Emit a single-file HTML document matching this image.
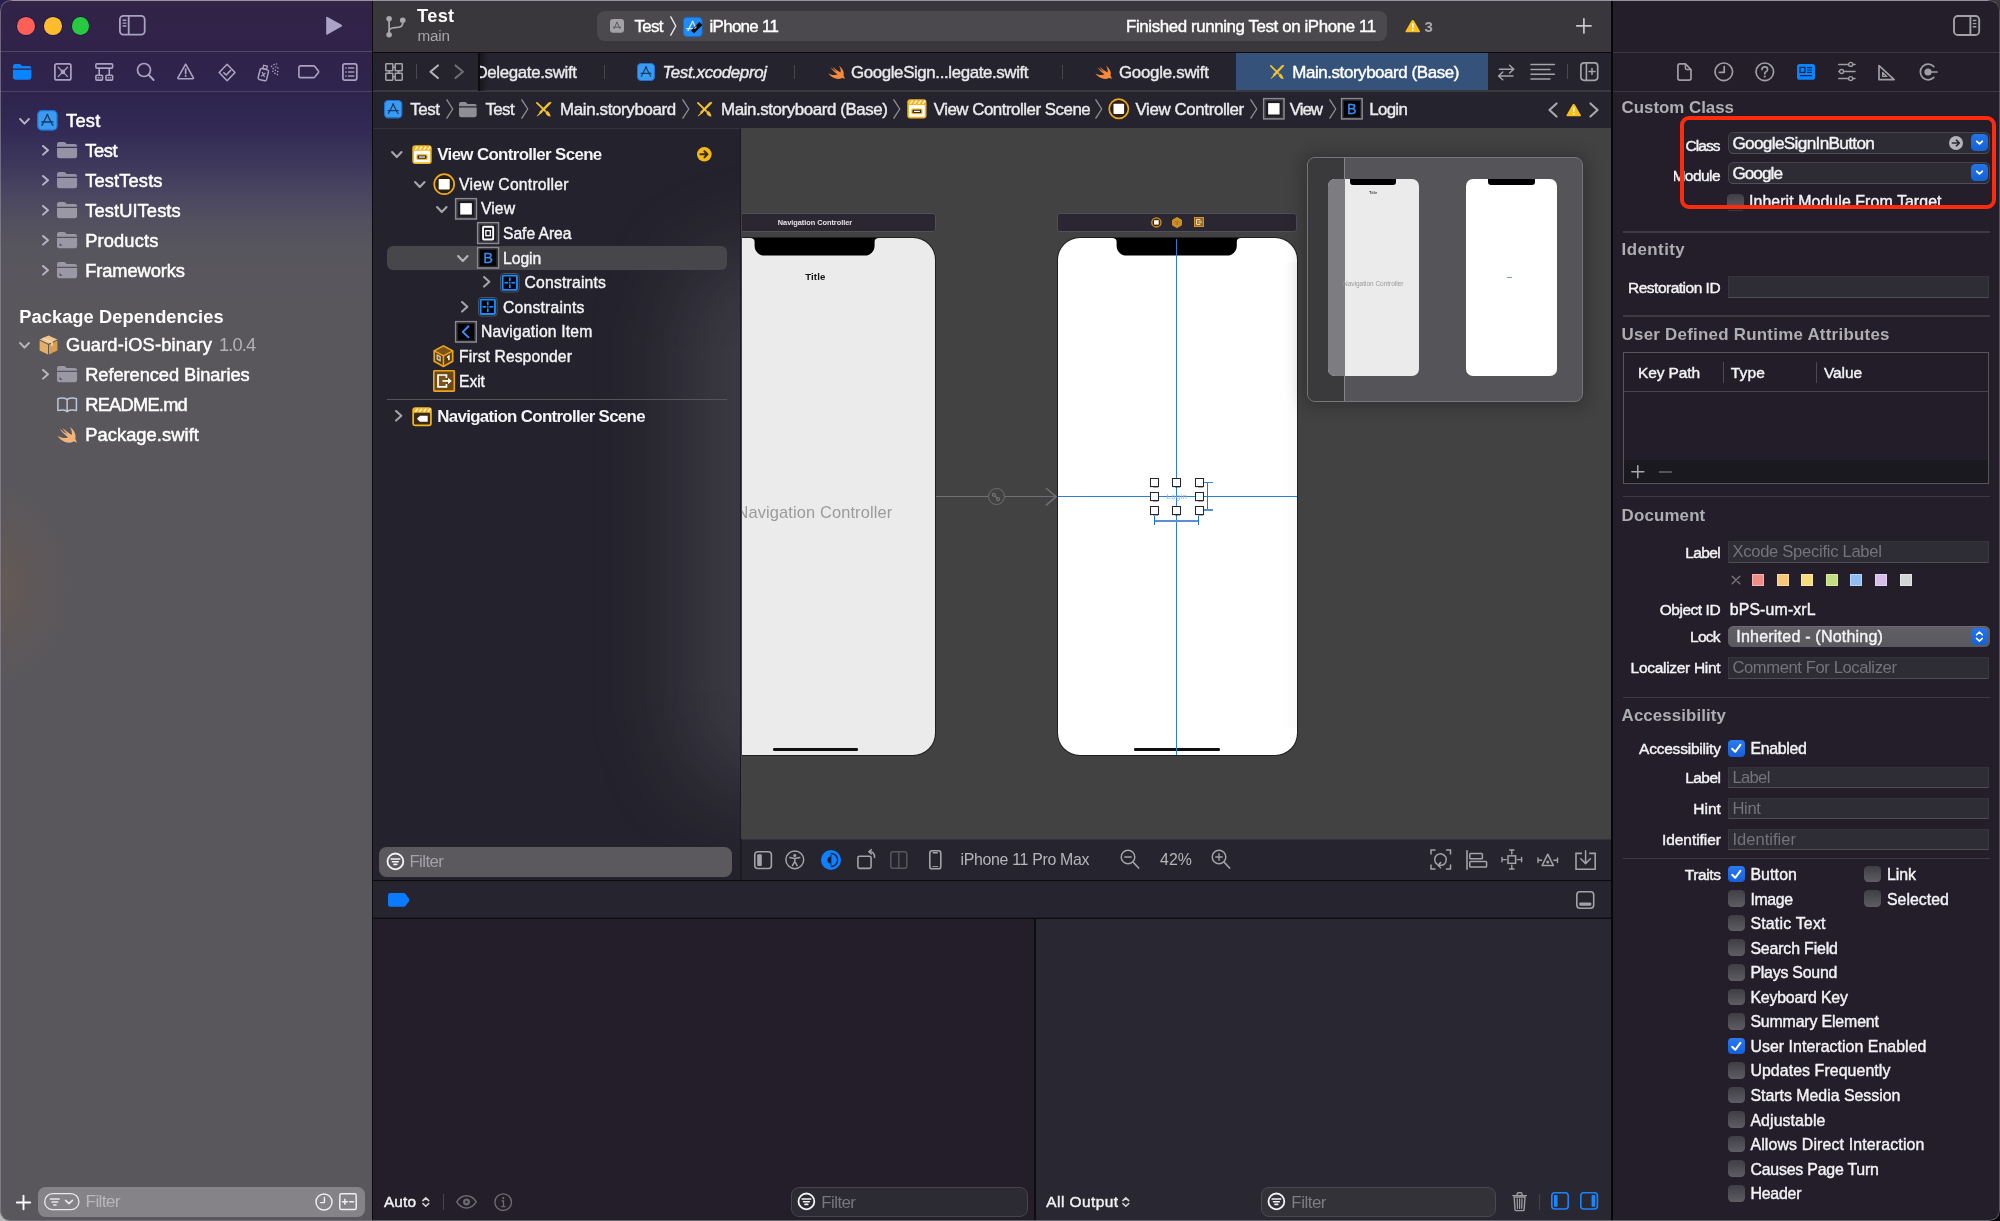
<!DOCTYPE html>
<html lang="en"><head><meta charset="utf-8"><title>Xcode</title><style>
html,body{margin:0;padding:0;background:#1c1a22;}
body{width:2000px;height:1221px;position:relative;overflow:hidden;font-family:"Liberation Sans",sans-serif;}
#win{position:absolute;left:0;top:0;width:2000px;height:1221px;overflow:hidden;will-change:transform;border-radius:10.5px;}
.r{position:absolute;display:block;box-sizing:border-box;}
.t{position:absolute;white-space:pre;display:block;}
svg{overflow:visible;}
</style></head>
<body>
<div class="r" style="left:0;top:0;width:14px;height:14px;background:#2a1f52"></div><div class="r" style="right:0;top:0;width:14px;height:14px;background:#3a393d"></div><div class="r" style="left:0;bottom:0;width:14px;height:14px;background:#b9b9ba"></div><div class="r" style="right:0;bottom:0;width:14px;height:14px;background:#060608"></div>
<div id="win">
<div class="r" style="left:0.00px;top:0.00px;width:372.00px;height:1221.00px;background:linear-gradient(to bottom,#322347 0px,#30234a 52px,#2e244e 95px,#322a55 130px,#3e385c 165px,#4a4660 195px,#53505f 222px,#58565d 252px,#59575c 300px,#59575c 1221px);"></div>
<div class="r" style="left:0.00px;top:470.00px;width:160.00px;height:240.00px;background:radial-gradient(ellipse 75px 105px at 0px 115px,rgba(116,92,78,0.5) 0%,rgba(106,90,82,0.32) 45%,rgba(89,87,92,0) 100%);"></div>
<div class="r" style="left:0.00px;top:51.00px;width:372.00px;height:1.00px;background:rgba(255,255,255,0.16);"></div>
<div class="r" style="left:0.00px;top:91.00px;width:372.00px;height:1.00px;background:rgba(255,255,255,0.14);"></div>
<div class="r" style="left:373.00px;top:0.00px;width:1238.00px;height:52.00px;background:#39373c;"></div>
<div class="r" style="left:373.00px;top:52.00px;width:1238.00px;height:1.00px;background:#0b0a0e;"></div>
<div class="r" style="left:373.00px;top:53.00px;width:1238.00px;height:75.00px;background:#25232d;"></div>
<div class="r" style="left:373.00px;top:90.00px;width:1238.00px;height:1.50px;background:#3a3840;"></div>
<div class="r" style="left:373.00px;top:127.50px;width:368.00px;height:1.00px;background:#35333b;"></div>
<div class="r" style="left:373.00px;top:128.50px;width:368.00px;height:752.00px;background:#24222c;"></div>
<div class="r" style="left:373px;top:128.5px;width:367.5px;height:752px;overflow:hidden">
<div class="r" style="left:312px;top:125px;width:200px;height:535px;border-radius:60px;background:rgba(150,150,158,0.22);filter:blur(44px)"></div>
</div>
<div class="r" style="left:741.00px;top:128.00px;width:870.00px;height:711.00px;background:#424242;"></div>
<div class="r" style="left:740.00px;top:128.00px;width:1.30px;height:752.00px;background:#1b1a1f;"></div>
<div class="r" style="left:741.50px;top:839.60px;width:869.50px;height:40.40px;background:#26242e;"></div>
<div class="r" style="left:741.50px;top:839.20px;width:869.50px;height:1.00px;background:#33313a;"></div>
<div class="r" style="left:373.00px;top:879.50px;width:1238.00px;height:1.40px;background:#0b0a0e;"></div>
<div class="r" style="left:373.00px;top:880.90px;width:1238.00px;height:36.60px;background:#26242e;"></div>
<div class="r" style="left:373.00px;top:917.50px;width:1238.00px;height:1.00px;background:#0e0d12;"></div>
<div class="r" style="left:373.00px;top:918.50px;width:661.00px;height:303.00px;background:#231e2a;"></div>
<div class="r" style="left:1034.00px;top:918.50px;width:1.50px;height:303.00px;background:#0e0d12;"></div>
<div class="r" style="left:1035.50px;top:918.50px;width:575.50px;height:303.00px;background:#292832;"></div>
<div class="r" style="left:1612.00px;top:0.00px;width:388.00px;height:1221.00px;background:#231e2a;"></div>
<div class="r" style="left:1611.00px;top:0.00px;width:1.60px;height:1221.00px;background:#070609;"></div>
<div class="r" style="left:1613.00px;top:52.00px;width:387.00px;height:1.00px;background:#3a3840;"></div>
<div class="r" style="left:1613.00px;top:90.50px;width:387.00px;height:1.20px;background:#3a3840;"></div>
<div class="r" style="left:372.00px;top:0.00px;width:1.20px;height:1221.00px;background:#0d0b12;"></div>
<div class="r" style="left:17.10px;top:17.10px;width:17.60px;height:17.60px;background:#fe5f57;border-radius:50%;box-shadow:0 0 0 0.7px rgba(10,10,60,0.55);"></div>
<div class="r" style="left:44.30px;top:17.10px;width:17.60px;height:17.60px;background:#febc2e;border-radius:50%;box-shadow:0 0 0 0.7px rgba(10,10,60,0.55);"></div>
<div class="r" style="left:71.50px;top:17.10px;width:17.60px;height:17.60px;background:#28c840;border-radius:50%;box-shadow:0 0 0 0.7px rgba(10,10,60,0.55);"></div>
<svg class="r" style="left:119.20px;top:15.10px;" width="26.60" height="20.50" viewBox="0 0 26.6 20.5" preserveAspectRatio="none"><rect x="0.9" y="0.9" width="24.8" height="18.7" rx="3.6" fill="none" stroke="#a9a3c0" stroke-width="1.8"/><path d="M9.7 1 L9.7 19.5" stroke="#a9a3c0" stroke-width="1.8"/><g stroke="#a9a3c0" stroke-width="1.4"><path d="M3.6 5.2 L7.4 5.2"/><path d="M3.6 8.1 L7.4 8.1"/><path d="M3.6 11 L7.4 11"/></g></svg>
<svg class="r" style="left:325.20px;top:15.60px;" width="18.00" height="19.50" viewBox="0 0 18 19.5" preserveAspectRatio="none"><path d="M1.2 1.6 Q1.2 0.2 2.5 0.9 L16.6 8.8 Q17.8 9.7 16.6 10.6 L2.5 18.6 Q1.2 19.3 1.2 17.9 Z" fill="#aba2c8"/></svg>
<svg class="r" style="left:12.80px;top:63.90px;" width="18.40" height="15.70" viewBox="0 0 18.4 15.7" preserveAspectRatio="none"><path d="M0 2.4 Q0 0 2.4 0 L6.2 0 Q7.2 0 7.9 0.7 L9.2 2 L16 2 Q18.4 2 18.4 4.4 L18.4 4.5 L0 4.5 Z" fill="#0a84ff"/><path d="M0 5.7 L18.4 5.7 L18.4 13.3 Q18.4 15.7 16 15.7 L2.4 15.7 Q0 15.7 0 13.3 Z" fill="#0a84ff"/></svg>
<svg class="r" style="left:54.00px;top:62.70px;" width="17.80" height="17.80" viewBox="0 0 17.8 17.8" preserveAspectRatio="none"><rect x="0.9" y="0.9" width="16" height="16" rx="2" fill="none" stroke="#a9a3c0" stroke-width="1.7"/><g stroke="#a9a3c0" stroke-width="1.3" stroke-linecap="round"><path d="M4.2 4.2 L13.6 13.6"/><path d="M13.6 4.2 L4.2 13.6"/></g><circle cx="8.9" cy="8.9" r="2.3" fill="#a9a3c0"/></svg>
<svg class="r" style="left:95.00px;top:62.50px;" width="18.50" height="18.00" viewBox="0 0 18.5 18" preserveAspectRatio="none"><rect x="0.9" y="0.9" width="16.7" height="4.2" rx="0.8" fill="none" stroke="#a9a3c0" stroke-width="1.6"/><path d="M4.2 5.2 L4.2 12.2 M14.3 5.2 L14.3 12.2" stroke="#a9a3c0" stroke-width="1.6" fill="none"/><rect x="0.9" y="12.3" width="6.6" height="4.8" rx="0.8" fill="none" stroke="#a9a3c0" stroke-width="1.6"/><rect x="11" y="12.3" width="6.6" height="4.8" rx="0.8" fill="none" stroke="#a9a3c0" stroke-width="1.6"/><circle cx="3.3" cy="14.7" r="0.7" fill="#a9a3c0"/><circle cx="5.2" cy="14.7" r="0.7" fill="#a9a3c0"/><circle cx="13.4" cy="14.7" r="0.7" fill="#a9a3c0"/><circle cx="15.3" cy="14.7" r="0.7" fill="#a9a3c0"/></svg>
<svg class="r" style="left:135.50px;top:62.00px;" width="19.00" height="19.50" viewBox="0 0 19 19.5" preserveAspectRatio="none"><circle cx="8" cy="8" r="6.5" fill="none" stroke="#a9a3c0" stroke-width="1.7"/><path d="M12.8 13 L17.6 18" stroke="#a9a3c0" stroke-width="1.9" stroke-linecap="round"/></svg>
<svg class="r" style="left:177.00px;top:62.50px;" width="17.30" height="16.70" viewBox="0 0 17.3 16.7" preserveAspectRatio="none"><path d="M8.65 1.2 L16.3 14.6 Q16.8 15.7 15.6 15.8 L1.7 15.8 Q0.5 15.7 1 14.6 Z" fill="none" stroke="#a9a3c0" stroke-width="1.6" stroke-linejoin="round"/><path d="M8.65 6 L8.65 10.6" stroke="#a9a3c0" stroke-width="1.7" stroke-linecap="round"/><circle cx="8.65" cy="13.1" r="1" fill="#a9a3c0"/></svg>
<svg class="r" style="left:217.80px;top:62.50px;" width="18.20" height="19.00" viewBox="0 0 18.2 19" preserveAspectRatio="none"><path d="M9.1 1.3 L17 9.5 L9.1 17.7 L1.2 9.5 Z" fill="none" stroke="#a9a3c0" stroke-width="1.6" stroke-linejoin="round"/><path d="M5.9 9.8 L8.3 12 L12.6 7.4" fill="none" stroke="#a9a3c0" stroke-width="1.6" stroke-linecap="round" stroke-linejoin="round"/></svg>
<svg class="r" style="left:257.50px;top:62.50px;" width="21.00" height="18.50" viewBox="0 0 21 18.5" preserveAspectRatio="none"><g transform="rotate(14 6 11)"><rect x="1.2" y="6.2" width="8.6" height="11.2" rx="1.6" fill="none" stroke="#a9a3c0" stroke-width="1.5"/><rect x="3.6" y="2.6" width="3.8" height="3.4" fill="none" stroke="#a9a3c0" stroke-width="1.3"/><path d="M3.8 9.6 L7.2 13.8 M7.2 9.6 L3.8 13.8" stroke="#a9a3c0" stroke-width="1.2"/></g><g fill="#a9a3c0"><circle cx="13.6" cy="3.4" r="0.8"/><circle cx="16" cy="1.6" r="0.8"/><circle cx="18.6" cy="1" r="0.8"/><circle cx="15.2" cy="5.6" r="0.8"/><circle cx="17.8" cy="4" r="0.8"/><circle cx="20" cy="5" r="0.8"/><circle cx="14.8" cy="8.2" r="0.8"/><circle cx="17.4" cy="7.2" r="0.8"/><circle cx="19.8" cy="8.6" r="0.8"/><circle cx="17" cy="10.4" r="0.8"/><circle cx="19.4" cy="11.6" r="0.8"/></g></svg>
<svg class="r" style="left:297.50px;top:64.50px;" width="21.50" height="13.50" viewBox="0 0 21.5 13.5" preserveAspectRatio="none"><path d="M2.6 0.9 L15.4 0.9 Q16.2 0.9 16.8 1.6 L20.4 6 Q20.9 6.75 20.4 7.5 L16.8 11.9 Q16.2 12.6 15.4 12.6 L2.6 12.6 Q0.9 12.6 0.9 10.9 L0.9 2.6 Q0.9 0.9 2.6 0.9 Z" fill="none" stroke="#a9a3c0" stroke-width="1.6"/></svg>
<svg class="r" style="left:341.80px;top:63.00px;" width="15.70" height="18.00" viewBox="0 0 15.7 18" preserveAspectRatio="none"><rect x="0.9" y="0.9" width="13.9" height="16.2" rx="2" fill="none" stroke="#a9a3c0" stroke-width="1.7"/><g stroke="#a9a3c0" stroke-width="1.4"><path d="M6 5 L12.4 5"/><path d="M6 9 L12.4 9"/><path d="M6 13 L12.4 13"/><path d="M3.3 5 L4.6 5"/><path d="M3.3 9 L4.6 9"/><path d="M3.3 13 L4.6 13"/></g></svg>
<svg class="r" style="left:19.00px;top:117.50px;" width="11.00" height="6.60" viewBox="0 0 11 7" preserveAspectRatio="none"><path d="M1 1 L5.5 6 L10 1" fill="none" stroke="#b7b3c6" stroke-width="2" stroke-linecap="round" stroke-linejoin="round"/></svg>
<svg class="r" style="left:37.20px;top:109.90px;" width="20.70" height="20.70" viewBox="0 0 20 20" preserveAspectRatio="none"><rect x="0.6" y="0.6" width="18.8" height="18.8" rx="4" fill="#3a9bf3" stroke="#1d73d3" stroke-width="1.2"/><g stroke="#173a66" stroke-width="1.3" fill="none" stroke-linecap="round"><path d="M10 4.6 L5.6 13.4"/><path d="M10 4.6 L14.4 13.4"/><path d="M4.6 11.6 L15.4 11.6"/></g><circle cx="10" cy="4.6" r="1" fill="#173a66"/><circle cx="4.9" cy="14.4" r="0.9" fill="#173a66"/><circle cx="15.1" cy="14.4" r="0.9" fill="#173a66"/></svg>
<span class="t" style="left:66.00px;top:110px;font-size:18.30px;color:#ffffff;line-height:21px;height:21px;letter-spacing:0.279px;-webkit-text-stroke:0.49px #ffffff;">Test</span>
<svg class="r" style="left:41.50px;top:144.70px;" width="7.00" height="10.60" viewBox="0 0 7 11" preserveAspectRatio="none"><path d="M1 1 L6 5.5 L1 10" fill="none" stroke="#b7b3c6" stroke-width="2" stroke-linecap="round" stroke-linejoin="round"/></svg>
<svg class="r" style="left:56.70px;top:142.20px;" width="20.10" height="16.30" viewBox="0 0 20 16" preserveAspectRatio="none"><path d="M0 2.2 Q0 0 2.2 0 L6.8 0 Q7.8 0 8.5 0.8 L9.6 2 L17.8 2 Q20 2 20 4.2 L20 4.6 L0 4.6 Z" fill="#9492a4"/><path d="M0 5.8 L20 5.8 L20 13.8 Q20 16 17.8 16 L2.2 16 Q0 16 0 13.8 Z" fill="#9492a4"/></svg>
<span class="t" style="left:85.20px;top:140px;font-size:18.30px;color:#ffffff;line-height:21px;height:21px;letter-spacing:-0.387px;-webkit-text-stroke:0.49px #ffffff;">Test</span>
<svg class="r" style="left:41.50px;top:174.70px;" width="7.00" height="10.60" viewBox="0 0 7 11" preserveAspectRatio="none"><path d="M1 1 L6 5.5 L1 10" fill="none" stroke="#b7b3c6" stroke-width="2" stroke-linecap="round" stroke-linejoin="round"/></svg>
<svg class="r" style="left:56.70px;top:172.20px;" width="20.10" height="16.30" viewBox="0 0 20 16" preserveAspectRatio="none"><path d="M0 2.2 Q0 0 2.2 0 L6.8 0 Q7.8 0 8.5 0.8 L9.6 2 L17.8 2 Q20 2 20 4.2 L20 4.6 L0 4.6 Z" fill="#9492a4"/><path d="M0 5.8 L20 5.8 L20 13.8 Q20 16 17.8 16 L2.2 16 Q0 16 0 13.8 Z" fill="#9492a4"/></svg>
<span class="t" style="left:85.20px;top:170px;font-size:18.30px;color:#ffffff;line-height:21px;height:21px;letter-spacing:0.141px;-webkit-text-stroke:0.49px #ffffff;">TestTests</span>
<svg class="r" style="left:41.50px;top:204.70px;" width="7.00" height="10.60" viewBox="0 0 7 11" preserveAspectRatio="none"><path d="M1 1 L6 5.5 L1 10" fill="none" stroke="#b7b3c6" stroke-width="2" stroke-linecap="round" stroke-linejoin="round"/></svg>
<svg class="r" style="left:56.70px;top:202.20px;" width="20.10" height="16.30" viewBox="0 0 20 16" preserveAspectRatio="none"><path d="M0 2.2 Q0 0 2.2 0 L6.8 0 Q7.8 0 8.5 0.8 L9.6 2 L17.8 2 Q20 2 20 4.2 L20 4.6 L0 4.6 Z" fill="#9a98a4"/><path d="M0 5.8 L20 5.8 L20 13.8 Q20 16 17.8 16 L2.2 16 Q0 16 0 13.8 Z" fill="#9a98a4"/></svg>
<span class="t" style="left:85.20px;top:200px;font-size:18.30px;color:#ffffff;line-height:21px;height:21px;letter-spacing:0.103px;-webkit-text-stroke:0.49px #ffffff;">TestUITests</span>
<svg class="r" style="left:41.50px;top:234.70px;" width="7.00" height="10.60" viewBox="0 0 7 11" preserveAspectRatio="none"><path d="M1 1 L6 5.5 L1 10" fill="none" stroke="#b7b3c6" stroke-width="2" stroke-linecap="round" stroke-linejoin="round"/></svg>
<svg class="r" style="left:56.70px;top:232.20px;" width="20.10" height="16.30" viewBox="0 0 20 16" preserveAspectRatio="none"><path d="M0 2.2 Q0 0 2.2 0 L6.8 0 Q7.8 0 8.5 0.8 L9.6 2 L17.8 2 Q20 2 20 4.2 L20 4.6 L0 4.6 Z" fill="#9a98a4"/><path d="M0 5.8 L20 5.8 L20 13.8 Q20 16 17.8 16 L2.2 16 Q0 16 0 13.8 Z" fill="#9a98a4"/><path d="M2.6 10.8 L2.6 13.6 L5.4 13.6 Z" fill="#4a4850"/></svg>
<span class="t" style="left:85.20px;top:230px;font-size:18.30px;color:#ffffff;line-height:21px;height:21px;letter-spacing:0.140px;-webkit-text-stroke:0.49px #ffffff;">Products</span>
<svg class="r" style="left:41.50px;top:264.70px;" width="7.00" height="10.60" viewBox="0 0 7 11" preserveAspectRatio="none"><path d="M1 1 L6 5.5 L1 10" fill="none" stroke="#b7b3c6" stroke-width="2" stroke-linecap="round" stroke-linejoin="round"/></svg>
<svg class="r" style="left:56.70px;top:262.20px;" width="20.10" height="16.30" viewBox="0 0 20 16" preserveAspectRatio="none"><path d="M0 2.2 Q0 0 2.2 0 L6.8 0 Q7.8 0 8.5 0.8 L9.6 2 L17.8 2 Q20 2 20 4.2 L20 4.6 L0 4.6 Z" fill="#9a98a4"/><path d="M0 5.8 L20 5.8 L20 13.8 Q20 16 17.8 16 L2.2 16 Q0 16 0 13.8 Z" fill="#9a98a4"/><path d="M2.6 10.8 L2.6 13.6 L5.4 13.6 Z" fill="#4a4850"/></svg>
<span class="t" style="left:85.20px;top:260px;font-size:18.30px;color:#ffffff;line-height:21px;height:21px;letter-spacing:-0.096px;-webkit-text-stroke:0.49px #ffffff;">Frameworks</span>
<span class="t" style="left:19.20px;top:306px;font-size:18.30px;color:#ffffff;line-height:21px;height:21px;font-weight:700;letter-spacing:0.061px;">Package Dependencies</span>
<svg class="r" style="left:19.00px;top:341.70px;" width="11.00" height="6.60" viewBox="0 0 11 7" preserveAspectRatio="none"><path d="M1 1 L5.5 6 L10 1" fill="none" stroke="#b9b7bd" stroke-width="2" stroke-linecap="round" stroke-linejoin="round"/></svg>
<svg class="r" style="left:38.50px;top:334.50px;" width="19.00" height="20.00" viewBox="0 0 19 20" preserveAspectRatio="none"><path d="M9.5 0.6 L18.4 4.6 L9.5 8.8 L0.6 4.6 Z" fill="#f0c68a"/><path d="M0.6 5.6 L9 9.7 L9 19.6 L0.6 15.4 Z" fill="#e3ae66"/><path d="M18.4 5.6 L10 9.7 L10 19.6 L18.4 15.4 Z" fill="#d99d52"/><path d="M4.6 2.6 L13.8 7 L13.8 10.6 L12 11.4 L12 7.8 L3 3.4 Z" fill="#f8dcb0" opacity="0.85"/></svg>
<span class="t" style="left:66.00px;top:334px;font-size:18.30px;color:#ffffff;line-height:21px;height:21px;letter-spacing:0.173px;-webkit-text-stroke:0.49px #ffffff;">Guard-iOS-binary</span>
<span class="t" style="left:219.00px;top:334px;font-size:18.30px;color:#b4b2b7;line-height:21px;height:21px;letter-spacing:-0.850px;">1.0.4</span>
<svg class="r" style="left:41.50px;top:368.70px;" width="7.00" height="10.60" viewBox="0 0 7 11" preserveAspectRatio="none"><path d="M1 1 L6 5.5 L1 10" fill="none" stroke="#b9b7bd" stroke-width="2" stroke-linecap="round" stroke-linejoin="round"/></svg>
<svg class="r" style="left:56.70px;top:366.20px;" width="20.10" height="16.30" viewBox="0 0 20 16" preserveAspectRatio="none"><path d="M0 2.2 Q0 0 2.2 0 L6.8 0 Q7.8 0 8.5 0.8 L9.6 2 L17.8 2 Q20 2 20 4.2 L20 4.6 L0 4.6 Z" fill="#9a98a4"/><path d="M0 5.8 L20 5.8 L20 13.8 Q20 16 17.8 16 L2.2 16 Q0 16 0 13.8 Z" fill="#9a98a4"/><path d="M2.6 10.8 L2.6 13.6 L5.4 13.6 Z" fill="#4a4850"/></svg>
<span class="t" style="left:85.20px;top:364px;font-size:18.30px;color:#ffffff;line-height:21px;height:21px;letter-spacing:-0.067px;-webkit-text-stroke:0.49px #ffffff;">Referenced Binaries</span>
<svg class="r" style="left:56.70px;top:396.50px;" width="20.30" height="16.00" viewBox="0 0 20.3 16" preserveAspectRatio="none"><path d="M10.15 2.6 C8.4 0.9 4 0.6 0.9 1.6 L0.9 13.6 C4 12.6 8.4 12.9 10.15 14.6 C11.9 12.9 16.3 12.6 19.4 13.6 L19.4 1.6 C16.3 0.6 11.9 0.9 10.15 2.6 Z M10.15 2.6 L10.15 14.6" fill="none" stroke="#b9c6dc" stroke-width="1.5" stroke-linejoin="round"/></svg>
<span class="t" style="left:85.20px;top:394px;font-size:18.30px;color:#ffffff;line-height:21px;height:21px;letter-spacing:-0.763px;-webkit-text-stroke:0.49px #ffffff;">README.md</span>
<svg class="r" style="left:57.00px;top:426.00px;" width="20.00" height="17.50" viewBox="0 0 18 16" preserveAspectRatio="none"><path d="M11.6 0.8 C15.6 3.6 17.6 8.2 16.4 11.6 C17.8 13.4 17.6 15 17.4 15.6 C16.4 14 15.2 14 14.4 14.4 C12.6 15.4 9.8 15.6 7.2 14.6 C4.4 13.6 2 11.6 0.4 9 C2.2 10.2 4.6 11.2 7 11 C8.4 10.9 9.4 10.6 10 10.2 C7 8 4.2 5 2.4 2.4 C4.8 4.4 7.4 6.4 9.2 7.4 C7.6 5.6 5.8 3.4 4.6 1.6 C7.6 4.2 10.6 6.8 13.2 8.2 C13.8 6 13.2 3.4 11.6 0.8 Z" fill="#f3b47a"/></svg>
<span class="t" style="left:85.20px;top:424px;font-size:18.30px;color:#ffffff;line-height:21px;height:21px;letter-spacing:0.075px;-webkit-text-stroke:0.49px #ffffff;">Package.swift</span>
<svg class="r" style="left:16.00px;top:1194.50px;" width="15.00" height="15.00" viewBox="0 0 15 15" preserveAspectRatio="none"><path d="M7.5 0.8 L7.5 14.2 M0.8 7.5 L14.2 7.5" stroke="#fff" stroke-width="1.9" stroke-linecap="round"/></svg>
<div class="r" style="left:38.00px;top:1186.60px;width:327.00px;height:30.60px;background:#858388;border-radius:7.5px;"></div>
<svg class="r" style="left:44.40px;top:1193.00px;" width="35.60" height="17.40" viewBox="0 0 35.6 17.4" preserveAspectRatio="none"><rect x="0.7" y="0.7" width="34.2" height="16" rx="8" fill="none" stroke="#e9e8ea" stroke-width="1.3"/><g stroke="#e9e8ea" stroke-width="1.5" stroke-linecap="round"><path d="M6.4 6 L15.2 6"/><path d="M8 9 L13.6 9"/><path d="M9.6 12 L12 12"/></g><path d="M21.6 7.4 L25 10.6 L28.4 7.4" fill="none" stroke="#e9e8ea" stroke-width="1.6" stroke-linecap="round" stroke-linejoin="round"/></svg>
<span class="t" style="left:85.60px;top:1191px;font-size:17.40px;color:#b9b7bc;line-height:20px;height:20px;letter-spacing:-0.733px;">Filter</span>
<svg class="r" style="left:315.40px;top:1193.00px;" width="18.00" height="18.00" viewBox="0 0 18 18" preserveAspectRatio="none"><circle cx="9" cy="9" r="8" fill="none" stroke="#efeef0" stroke-width="1.4"/><path d="M9.4 4.4 L9.4 9.6 L5.6 9.6" fill="none" stroke="#efeef0" stroke-width="1.4" stroke-linecap="round" stroke-linejoin="round"/></svg>
<svg class="r" style="left:338.60px;top:1193.00px;" width="18.00" height="17.40" viewBox="0 0 18 17.4" preserveAspectRatio="none"><rect x="0.8" y="0.8" width="16.4" height="15.8" rx="1.6" fill="none" stroke="#efeef0" stroke-width="1.5"/><path d="M3.4 8.7 L8.4 8.7 M5.9 6.2 L5.9 11.2 M10.6 8.7 L14.6 8.7" stroke="#efeef0" stroke-width="1.5" stroke-linecap="round"/></svg>
<svg class="r" style="left:385.00px;top:14.50px;" width="22.00" height="24.00" viewBox="0 0 22 24" preserveAspectRatio="none"><g fill="none" stroke="#a9a8ad" stroke-width="1.7"><path d="M4.1 6 L4.1 17.6"/><path d="M17.75 7.6 C17.75 12.4 14 12.4 10 12.6 C6 12.8 4.1 13.6 4.1 17"/></g><circle cx="4.1" cy="3.75" r="2.8" fill="#a9a8ad"/><circle cx="17.75" cy="5.25" r="2.8" fill="#a9a8ad"/><circle cx="4.1" cy="19.75" r="2.8" fill="#a9a8ad"/></svg>
<span class="t" style="left:417.00px;top:6px;font-size:18.20px;color:#fff;line-height:20px;height:20px;font-weight:700;letter-spacing:0.376px;">Test</span>
<span class="t" style="left:417.50px;top:27px;font-size:15.30px;color:#a6a5a9;line-height:17px;height:17px;letter-spacing:-0.221px;">main</span>
<div class="r" style="left:597.00px;top:11.00px;width:790.00px;height:30.00px;background:#4b494e;border-radius:8px;"></div>
<svg class="r" style="left:610.00px;top:19.00px;" width="14.00" height="13.80" viewBox="0 0 14 13.8" preserveAspectRatio="none"><rect x="0" y="0" width="14" height="13.8" rx="3" fill="#a3a2a6"/><g stroke="#5d5b60" stroke-width="1" fill="none" stroke-linecap="round"><path d="M7 3.2 L4 9.6"/><path d="M7 3.2 L10 9.6"/><path d="M3.2 8.2 L10.8 8.2"/></g></svg>
<span class="t" style="left:634.50px;top:17px;font-size:16.90px;color:#fff;line-height:19px;height:19px;letter-spacing:-0.665px;-webkit-text-stroke:0.42px #fff;">Test</span>
<svg class="r" style="left:669.50px;top:16.00px;" width="6.70" height="20.00" viewBox="0 0 6.7 20" preserveAspectRatio="none"><path d="M0.8 0.8 L5.8 10 L0.8 19.2" fill="none" stroke="#e8e7ea" stroke-width="1.4" stroke-linecap="round" stroke-linejoin="round"/></svg>
<svg class="r" style="left:683.00px;top:16.50px;" width="19.50" height="20.00" viewBox="0 0 19.5 20" preserveAspectRatio="none"><rect x="0.3" y="0.3" width="18.9" height="19.4" rx="4" fill="#1f8bf6"/><rect x="0.3" y="0.3" width="18.9" height="19.4" rx="4" fill="none" stroke="#1566c8" stroke-width="0.8"/><g stroke="#cfe6ff" stroke-width="1.3" fill="none" stroke-linecap="round"><path d="M9.6 4.4 L5 13.6"/><path d="M9.6 4.4 L12.4 10"/><path d="M3.6 11.6 L13 11.6"/></g><path d="M8 13.4 L16.4 5 L19.4 8 L11 16.4 Z" fill="#0c0c10"/><path d="M11.4 11.6 L13.4 9.6" stroke="#cfd0d4" stroke-width="1.2"/></svg>
<span class="t" style="left:709.50px;top:17px;font-size:16.90px;color:#fff;line-height:19px;height:19px;letter-spacing:-0.671px;-webkit-text-stroke:0.42px #fff;">iPhone 11</span>
<span class="t" style="left:1126.00px;top:17px;font-size:16.90px;color:#fff;line-height:19px;height:19px;letter-spacing:-0.397px;-webkit-text-stroke:0.42px #fff;">Finished running Test on iPhone 11</span>
<svg class="r" style="left:1405.00px;top:19.00px;" width="15.50" height="14.00" viewBox="0 0 16 14.4" preserveAspectRatio="none"><path d="M8 1 Q8.8 1 9.3 1.9 L15.4 12.4 Q16 13.6 14.6 13.7 L1.4 13.7 Q0 13.6 0.6 12.4 L6.7 1.9 Q7.2 1 8 1 Z" fill="#f9bf1a"/><rect x="7.2" y="4.4" width="1.7" height="5" rx="0.8" fill="#fff"/><circle cx="8.05" cy="11.3" r="1" fill="#fff"/></svg>
<span class="t" style="left:1424.60px;top:18px;font-size:15.00px;color:#a9a8ad;line-height:17px;height:17px;font-weight:700;letter-spacing:0.057px;">3</span>
<svg class="r" style="left:1575.80px;top:18.20px;" width="15.80" height="15.80" viewBox="0 0 15.8 15.8" preserveAspectRatio="none"><path d="M7.9 0.8 L7.9 15 M0.8 7.9 L15 7.9" stroke="#c9c8cc" stroke-width="1.7" stroke-linecap="round"/></svg>
<svg class="r" style="left:385.00px;top:63.00px;" width="18.00" height="18.00" viewBox="0 0 18 18" preserveAspectRatio="none"><g fill="none" stroke="#a4a3a9" stroke-width="1.5"><rect x="0.8" y="0.8" width="7" height="7" rx="0.6"/><rect x="10.2" y="0.8" width="7" height="7" rx="0.6"/><rect x="0.8" y="10.2" width="7" height="7" rx="0.6"/><rect x="10.2" y="10.2" width="7" height="7" rx="0.6"/><path d="M7.8 4.3 L10.2 4.3 M7.8 13.7 L10.2 13.7 M4.3 7.8 L4.3 10.2 M13.7 7.8 L13.7 10.2"/></g></svg>
<div class="r" style="left:415.60px;top:64.00px;width:1.20px;height:15.00px;background:#4a4850;"></div>
<svg class="r" style="left:428.60px;top:63.75px;" width="10.40" height="15.50" viewBox="0 0 7 11" preserveAspectRatio="none"><path d="M6 1 L1 5.5 L6 10" fill="none" stroke="#b3b2b8" stroke-width="1.4" stroke-linecap="round" stroke-linejoin="round"/></svg>
<svg class="r" style="left:453.80px;top:63.75px;" width="10.40" height="15.50" viewBox="0 0 7 11" preserveAspectRatio="none"><path d="M1 1 L6 5.5 L1 10" fill="none" stroke="#6f6e75" stroke-width="1.4" stroke-linecap="round" stroke-linejoin="round"/></svg>
<div class="r" style="left:478.00px;top:53.00px;width:2.00px;height:37.50px;background:#0d0c11;"></div>
<div class="r" style="left:480.00px;top:53.00px;width:8.00px;height:37.50px;background:linear-gradient(to right,rgba(13,12,17,0.55),rgba(13,12,17,0));"></div>
<div class="r" style="left:480px;top:53px;width:110px;height:37px;overflow:hidden">
<span class="t" style="left:-4.60px;top:10px;font-size:16.90px;color:#e9e8eb;line-height:19px;height:19px;letter-spacing:-0.350px;-webkit-text-stroke:0.42px #e9e8eb;">Delegate.swift</span>
</div>
<div class="r" style="left:603.80px;top:64.50px;width:1.30px;height:14.50px;background:#47454c;"></div>
<div class="r" style="left:793.90px;top:64.50px;width:1.30px;height:14.50px;background:#47454c;"></div>
<div class="r" style="left:1061.70px;top:64.50px;width:1.30px;height:14.50px;background:#47454c;"></div>
<svg class="r" style="left:637.00px;top:63.00px;" width="18.00" height="18.00" viewBox="0 0 20 20" preserveAspectRatio="none"><rect x="0.6" y="0.6" width="18.8" height="18.8" rx="4" fill="#3a9bf3" stroke="#1d73d3" stroke-width="1.2"/><g stroke="#173a66" stroke-width="1.3" fill="none" stroke-linecap="round"><path d="M10 4.6 L5.6 13.4"/><path d="M10 4.6 L14.4 13.4"/><path d="M4.6 11.6 L15.4 11.6"/></g><circle cx="10" cy="4.6" r="1" fill="#173a66"/><circle cx="4.9" cy="14.4" r="0.9" fill="#173a66"/><circle cx="15.1" cy="14.4" r="0.9" fill="#173a66"/></svg>
<span class="t" style="left:662.40px;top:63px;font-size:16.90px;color:#e9e8eb;line-height:19px;height:19px;font-style:italic;letter-spacing:-0.361px;-webkit-text-stroke:0.42px #e9e8eb;">Test.xcodeproj</span>
<svg class="r" style="left:827.60px;top:64.60px;" width="17.00" height="14.60" viewBox="0 0 18 16" preserveAspectRatio="none"><path d="M11.6 0.8 C15.6 3.6 17.6 8.2 16.4 11.6 C17.8 13.4 17.6 15 17.4 15.6 C16.4 14 15.2 14 14.4 14.4 C12.6 15.4 9.8 15.6 7.2 14.6 C4.4 13.6 2 11.6 0.4 9 C2.2 10.2 4.6 11.2 7 11 C8.4 10.9 9.4 10.6 10 10.2 C7 8 4.2 5 2.4 2.4 C4.8 4.4 7.4 6.4 9.2 7.4 C7.6 5.6 5.8 3.4 4.6 1.6 C7.6 4.2 10.6 6.8 13.2 8.2 C13.8 6 13.2 3.4 11.6 0.8 Z" fill="#f58a3c"/></svg>
<span class="t" style="left:851.00px;top:63px;font-size:16.90px;color:#e9e8eb;line-height:19px;height:19px;letter-spacing:-0.390px;-webkit-text-stroke:0.42px #e9e8eb;">GoogleSign...legate.swift</span>
<svg class="r" style="left:1095.20px;top:64.60px;" width="17.00" height="14.60" viewBox="0 0 18 16" preserveAspectRatio="none"><path d="M11.6 0.8 C15.6 3.6 17.6 8.2 16.4 11.6 C17.8 13.4 17.6 15 17.4 15.6 C16.4 14 15.2 14 14.4 14.4 C12.6 15.4 9.8 15.6 7.2 14.6 C4.4 13.6 2 11.6 0.4 9 C2.2 10.2 4.6 11.2 7 11 C8.4 10.9 9.4 10.6 10 10.2 C7 8 4.2 5 2.4 2.4 C4.8 4.4 7.4 6.4 9.2 7.4 C7.6 5.6 5.8 3.4 4.6 1.6 C7.6 4.2 10.6 6.8 13.2 8.2 C13.8 6 13.2 3.4 11.6 0.8 Z" fill="#f58a3c"/></svg>
<span class="t" style="left:1119.00px;top:63px;font-size:16.90px;color:#e9e8eb;line-height:19px;height:19px;letter-spacing:-0.272px;-webkit-text-stroke:0.42px #e9e8eb;">Google.swift</span>
<div class="r" style="left:1236.30px;top:53.00px;width:251.40px;height:37.00px;background:#35527a;"></div>
<svg class="r" style="left:1268.60px;top:63.60px;" width="16.00" height="16.40" viewBox="0 0 16 16" preserveAspectRatio="none"><g stroke="#f2c232" stroke-linecap="round" fill="none"><path d="M1.8 1.8 L9.6 9.4" stroke-width="1.7"/><path d="M13.4 2.2 L5.2 10.6" stroke-width="2.3"/></g><path d="M14.8 0.8 L15.4 1.4 L14.2 2.8 L13.4 2 Z" fill="#f2c232"/><path d="M5.6 9.6 L6.8 10.8 L2 14.6 L1.6 14.2 Z" fill="#f2c232"/><path d="M9.6 10.8 L11.2 9.2 C12.6 10 14 11.6 14.6 14.6 C12.4 14.8 10.4 13.4 9.6 10.8 Z" fill="#f2c232"/></svg>
<span class="t" style="left:1292.30px;top:63px;font-size:16.90px;color:#ffffff;line-height:19px;height:19px;letter-spacing:-0.407px;-webkit-text-stroke:0.42px #ffffff;">Main.storyboard (Base)</span>
<svg class="r" style="left:1497.00px;top:63.50px;" width="18.40" height="17.00" viewBox="0 0 18.4 17" preserveAspectRatio="none"><g fill="none" stroke="#a4a3a9" stroke-width="1.5" stroke-linecap="round" stroke-linejoin="round"><path d="M2.4 5.2 L16.6 5.2 M12.6 1.2 L16.8 5.2 L12.6 9"/><path d="M16 12 L1.8 12 M5.8 8 L1.6 12 L5.8 15.8"/></g></svg>
<svg class="r" style="left:1529.60px;top:63.40px;" width="25.40" height="17.60" viewBox="0 0 25.4 17.6" preserveAspectRatio="none"><g stroke="#a4a3a9" stroke-width="1.5" stroke-linecap="round"><path d="M1 1.6 L24.4 1.6"/><path d="M1 6.4 L20 6.4"/><path d="M1 11.2 L24.4 11.2"/><path d="M1 16 L20 16"/></g></svg>
<div class="r" style="left:1566.60px;top:64.00px;width:1.20px;height:15.00px;background:#4a4850;"></div>
<svg class="r" style="left:1580.00px;top:62.40px;" width="18.60" height="19.20" viewBox="0 0 18.6 19.2" preserveAspectRatio="none"><rect x="0.9" y="0.9" width="16.8" height="17.4" rx="3.2" fill="none" stroke="#a4a3a9" stroke-width="1.7"/><path d="M6.4 1 L6.4 18.2" stroke="#a4a3a9" stroke-width="1.6"/><path d="M12 6.6 L12 12.6 M9 9.6 L15 9.6" stroke="#a4a3a9" stroke-width="1.5" stroke-linecap="round"/></svg>
<svg class="r" style="left:384.00px;top:100.30px;" width="18.40" height="18.40" viewBox="0 0 20 20" preserveAspectRatio="none"><rect x="0.6" y="0.6" width="18.8" height="18.8" rx="4" fill="#3a9bf3" stroke="#1d73d3" stroke-width="1.2"/><g stroke="#173a66" stroke-width="1.3" fill="none" stroke-linecap="round"><path d="M10 4.6 L5.6 13.4"/><path d="M10 4.6 L14.4 13.4"/><path d="M4.6 11.6 L15.4 11.6"/></g><circle cx="10" cy="4.6" r="1" fill="#173a66"/><circle cx="4.9" cy="14.4" r="0.9" fill="#173a66"/><circle cx="15.1" cy="14.4" r="0.9" fill="#173a66"/></svg>
<span class="t" style="left:410.30px;top:100px;font-size:16.90px;color:#ebeaed;line-height:19px;height:19px;letter-spacing:-0.431px;-webkit-text-stroke:0.42px #ebeaed;">Test</span>
<svg class="r" style="left:445.60px;top:99.00px;" width="7.60" height="20.00" viewBox="0 0 7.2 20" preserveAspectRatio="none"><path d="M0.8 0.8 L6.4 10 L0.8 19.2" fill="none" stroke="#8d8c93" stroke-width="1.3" stroke-linecap="round" stroke-linejoin="round"/></svg>
<svg class="r" style="left:459.30px;top:101.60px;" width="17.70" height="15.20" viewBox="0 0 20 16" preserveAspectRatio="none"><path d="M0 2.2 Q0 0 2.2 0 L6.8 0 Q7.8 0 8.5 0.8 L9.6 2 L17.8 2 Q20 2 20 4.2 L20 4.6 L0 4.6 Z" fill="#8f8e96"/><path d="M0 5.8 L20 5.8 L20 13.8 Q20 16 17.8 16 L2.2 16 Q0 16 0 13.8 Z" fill="#8f8e96"/></svg>
<span class="t" style="left:485.50px;top:100px;font-size:16.90px;color:#ebeaed;line-height:19px;height:19px;letter-spacing:-0.631px;-webkit-text-stroke:0.42px #ebeaed;">Test</span>
<svg class="r" style="left:521.00px;top:99.00px;" width="7.60" height="20.00" viewBox="0 0 7.2 20" preserveAspectRatio="none"><path d="M0.8 0.8 L6.4 10 L0.8 19.2" fill="none" stroke="#8d8c93" stroke-width="1.3" stroke-linecap="round" stroke-linejoin="round"/></svg>
<svg class="r" style="left:535.00px;top:101.00px;" width="17.20" height="17.00" viewBox="0 0 16 16" preserveAspectRatio="none"><g stroke="#f2c232" stroke-linecap="round" fill="none"><path d="M1.8 1.8 L9.6 9.4" stroke-width="1.7"/><path d="M13.4 2.2 L5.2 10.6" stroke-width="2.3"/></g><path d="M14.8 0.8 L15.4 1.4 L14.2 2.8 L13.4 2 Z" fill="#f2c232"/><path d="M5.6 9.6 L6.8 10.8 L2 14.6 L1.6 14.2 Z" fill="#f2c232"/><path d="M9.6 10.8 L11.2 9.2 C12.6 10 14 11.6 14.6 14.6 C12.4 14.8 10.4 13.4 9.6 10.8 Z" fill="#f2c232"/></svg>
<span class="t" style="left:560.00px;top:100px;font-size:16.90px;color:#ebeaed;line-height:19px;height:19px;letter-spacing:-0.348px;-webkit-text-stroke:0.42px #ebeaed;">Main.storyboard</span>
<svg class="r" style="left:682.00px;top:99.00px;" width="7.60" height="20.00" viewBox="0 0 7.2 20" preserveAspectRatio="none"><path d="M0.8 0.8 L6.4 10 L0.8 19.2" fill="none" stroke="#8d8c93" stroke-width="1.3" stroke-linecap="round" stroke-linejoin="round"/></svg>
<svg class="r" style="left:696.00px;top:101.00px;" width="17.00" height="17.00" viewBox="0 0 16 16" preserveAspectRatio="none"><g stroke="#f2c232" stroke-linecap="round" fill="none"><path d="M1.8 1.8 L9.6 9.4" stroke-width="1.7"/><path d="M13.4 2.2 L5.2 10.6" stroke-width="2.3"/></g><path d="M14.8 0.8 L15.4 1.4 L14.2 2.8 L13.4 2 Z" fill="#f2c232"/><path d="M5.6 9.6 L6.8 10.8 L2 14.6 L1.6 14.2 Z" fill="#f2c232"/><path d="M9.6 10.8 L11.2 9.2 C12.6 10 14 11.6 14.6 14.6 C12.4 14.8 10.4 13.4 9.6 10.8 Z" fill="#f2c232"/></svg>
<span class="t" style="left:721.00px;top:100px;font-size:16.90px;color:#ebeaed;line-height:19px;height:19px;letter-spacing:-0.412px;-webkit-text-stroke:0.42px #ebeaed;">Main.storyboard (Base)</span>
<svg class="r" style="left:893.40px;top:99.00px;" width="7.60" height="20.00" viewBox="0 0 7.2 20" preserveAspectRatio="none"><path d="M0.8 0.8 L6.4 10 L0.8 19.2" fill="none" stroke="#8d8c93" stroke-width="1.3" stroke-linecap="round" stroke-linejoin="round"/></svg>
<svg class="r" style="left:907.00px;top:99.20px;" width="19.80" height="19.80" viewBox="0 0 20 20" preserveAspectRatio="none"><rect x="0.3" y="0.3" width="19.4" height="19.4" rx="3" fill="#f4b620"/><rect x="2" y="6" width="16" height="12" rx="1" fill="#ffffff"/><g stroke="#fff3d0" stroke-width="1.5"><path d="M3.2 4.8 L5.8 1.6"/><path d="M7.4 4.8 L10 1.6"/><path d="M11.6 4.8 L14.2 1.6"/><path d="M15.8 4.8 L18.4 1.6"/></g><rect x="5" y="10.2" width="10" height="4.6" rx="0.8" fill="#2b2b2b" stroke="#f4b620" stroke-width="1.2"/><rect x="7" y="11.9" width="6" height="1.2" fill="#ffffff"/></svg>
<span class="t" style="left:933.70px;top:100px;font-size:16.90px;color:#ebeaed;line-height:19px;height:19px;letter-spacing:-0.490px;-webkit-text-stroke:0.42px #ebeaed;">View Controller Scene</span>
<svg class="r" style="left:1095.40px;top:99.00px;" width="7.60" height="20.00" viewBox="0 0 7.2 20" preserveAspectRatio="none"><path d="M0.8 0.8 L6.4 10 L0.8 19.2" fill="none" stroke="#8d8c93" stroke-width="1.3" stroke-linecap="round" stroke-linejoin="round"/></svg>
<svg class="r" style="left:1107.90px;top:98.40px;" width="21.60" height="21.60" viewBox="0 0 22 22" preserveAspectRatio="none"><circle cx="11" cy="11" r="9.8" fill="#2a2112" stroke="#f0a91c" stroke-width="1.7"/><rect x="5.6" y="5.8" width="10.8" height="10.4" rx="0.8" fill="#ffffff"/></svg>
<span class="t" style="left:1135.50px;top:100px;font-size:16.90px;color:#ebeaed;line-height:19px;height:19px;letter-spacing:-0.392px;-webkit-text-stroke:0.42px #ebeaed;">View Controller</span>
<svg class="r" style="left:1249.80px;top:99.00px;" width="7.60" height="20.00" viewBox="0 0 7.2 20" preserveAspectRatio="none"><path d="M0.8 0.8 L6.4 10 L0.8 19.2" fill="none" stroke="#8d8c93" stroke-width="1.3" stroke-linecap="round" stroke-linejoin="round"/></svg>
<svg class="r" style="left:1262.50px;top:98.40px;" width="21.70" height="21.60" viewBox="0 0 22 22" preserveAspectRatio="none"><rect x="0.7" y="0.7" width="20.6" height="20.6" fill="#1d1c22" stroke="#8a898f" stroke-width="1.6"/><rect x="2.4" y="2.4" width="17.2" height="17.2" fill="none" stroke="#3a393f" stroke-width="1"/><rect x="5.2" y="5.2" width="11.6" height="11.6" fill="#ffffff"/></svg>
<span class="t" style="left:1289.80px;top:100px;font-size:16.90px;color:#ebeaed;line-height:19px;height:19px;letter-spacing:-1.042px;-webkit-text-stroke:0.42px #ebeaed;">View</span>
<svg class="r" style="left:1329.20px;top:99.00px;" width="7.60" height="20.00" viewBox="0 0 7.2 20" preserveAspectRatio="none"><path d="M0.8 0.8 L6.4 10 L0.8 19.2" fill="none" stroke="#8d8c93" stroke-width="1.3" stroke-linecap="round" stroke-linejoin="round"/></svg>
<svg class="r" style="left:1341.40px;top:98.40px;" width="21.80" height="21.60" viewBox="0 0 22 22" preserveAspectRatio="none"><rect x="0.7" y="0.7" width="20.6" height="20.6" fill="#050508" stroke="#8a898f" stroke-width="1.6"/><rect x="2.4" y="2.4" width="17.2" height="17.2" fill="none" stroke="#2a292f" stroke-width="1"/><text x="11" y="16.4" font-family="Liberation Sans, sans-serif" font-size="14.5" fill="#3b8df5" text-anchor="middle" stroke="#3b8df5" stroke-width="0.3">B</text></svg>
<span class="t" style="left:1369.30px;top:100px;font-size:16.90px;color:#ebeaed;line-height:19px;height:19px;letter-spacing:-0.713px;-webkit-text-stroke:0.42px #ebeaed;">Login</span>
<svg class="r" style="left:1548.40px;top:101.60px;" width="10.00" height="16.00" viewBox="0 0 7 11" preserveAspectRatio="none"><path d="M6 1 L1 5.5 L6 10" fill="none" stroke="#a9a8ae" stroke-width="1.5" stroke-linecap="round" stroke-linejoin="round"/></svg>
<svg class="r" style="left:1566.00px;top:102.60px;" width="15.40" height="14.00" viewBox="0 0 16 14.4" preserveAspectRatio="none"><path d="M8 1 Q8.8 1 9.3 1.9 L15.4 12.4 Q16 13.6 14.6 13.7 L1.4 13.7 Q0 13.6 0.6 12.4 L6.7 1.9 Q7.2 1 8 1 Z" fill="#f9bf1a"/><rect x="7.2" y="4.4" width="1.7" height="5" rx="0.8" fill="#fff"/><circle cx="8.05" cy="11.3" r="1" fill="#fff"/></svg>
<svg class="r" style="left:1588.80px;top:101.60px;" width="10.00" height="16.00" viewBox="0 0 7 11" preserveAspectRatio="none"><path d="M1 1 L6 5.5 L1 10" fill="none" stroke="#a9a8ae" stroke-width="1.5" stroke-linecap="round" stroke-linejoin="round"/></svg>
<div class="r" style="left:386.80px;top:246.00px;width:340.40px;height:24.00px;background:#47464a;border-radius:6px;"></div>
<svg class="r" style="left:391.20px;top:151.10px;" width="11.60" height="7.00" viewBox="0 0 11 7" preserveAspectRatio="none"><path d="M1 1 L5.5 6 L10 1" fill="none" stroke="#a5a4aa" stroke-width="2" stroke-linecap="round" stroke-linejoin="round"/></svg>
<svg class="r" style="left:412.20px;top:144.50px;" width="20.00" height="19.30" viewBox="0 0 20 20" preserveAspectRatio="none"><rect x="0.3" y="0.3" width="19.4" height="19.4" rx="3" fill="#f4b620"/><rect x="2" y="6" width="16" height="12" rx="1" fill="#ffffff"/><g stroke="#fff3d0" stroke-width="1.5"><path d="M3.2 4.8 L5.8 1.6"/><path d="M7.4 4.8 L10 1.6"/><path d="M11.6 4.8 L14.2 1.6"/><path d="M15.8 4.8 L18.4 1.6"/></g><rect x="5" y="10.2" width="10" height="4.6" rx="0.8" fill="#2b2b2b" stroke="#f4b620" stroke-width="1.2"/><rect x="7" y="11.9" width="6" height="1.2" fill="#ffffff"/></svg>
<span class="t" style="left:437.30px;top:145px;font-size:16.90px;color:#f4f3f5;line-height:19px;height:19px;font-weight:700;letter-spacing:-0.657px;">View Controller Scene</span>
<svg class="r" style="left:697.40px;top:147.20px;" width="14.60" height="14.60" viewBox="0 0 14.6 14.6" preserveAspectRatio="none"><circle cx="7.3" cy="7.3" r="7.3" fill="#f5b81c"/><path d="M3.4 7.3 L9.6 7.3 M7.4 4.2 L10.6 7.3 L7.4 10.4" fill="none" stroke="#3a2a06" stroke-width="1.9" stroke-linecap="round" stroke-linejoin="round"/></svg>
<svg class="r" style="left:413.60px;top:181.10px;" width="11.60" height="7.00" viewBox="0 0 11 7" preserveAspectRatio="none"><path d="M1 1 L5.5 6 L10 1" fill="none" stroke="#a5a4aa" stroke-width="2" stroke-linecap="round" stroke-linejoin="round"/></svg>
<svg class="r" style="left:432.90px;top:173.10px;" width="22.40" height="22.40" viewBox="0 0 22 22" preserveAspectRatio="none"><circle cx="11" cy="11" r="9.8" fill="#2a2112" stroke="#f0a91c" stroke-width="1.7"/><rect x="5.6" y="5.8" width="10.8" height="10.4" rx="0.8" fill="#ffffff"/></svg>
<span class="t" style="left:459.10px;top:176px;font-size:15.70px;color:#f4f3f5;line-height:17px;height:17px;letter-spacing:0.231px;-webkit-text-stroke:0.42px #f4f3f5;">View Controller</span>
<svg class="r" style="left:435.60px;top:205.70px;" width="11.60" height="7.00" viewBox="0 0 11 7" preserveAspectRatio="none"><path d="M1 1 L5.5 6 L10 1" fill="none" stroke="#a5a4aa" stroke-width="2" stroke-linecap="round" stroke-linejoin="round"/></svg>
<svg class="r" style="left:454.90px;top:198.10px;" width="22.10" height="21.70" viewBox="0 0 22 22" preserveAspectRatio="none"><rect x="0.7" y="0.7" width="20.6" height="20.6" fill="#1d1c22" stroke="#8a898f" stroke-width="1.6"/><rect x="2.4" y="2.4" width="17.2" height="17.2" fill="none" stroke="#3a393f" stroke-width="1"/><rect x="5.2" y="5.2" width="11.6" height="11.6" fill="#ffffff"/></svg>
<span class="t" style="left:481.00px;top:200px;font-size:15.70px;color:#f4f3f5;line-height:17px;height:17px;letter-spacing:0.084px;-webkit-text-stroke:0.42px #f4f3f5;">View</span>
<svg class="r" style="left:476.70px;top:222.40px;" width="22.20" height="22.10" viewBox="0 0 22 22" preserveAspectRatio="none"><rect x="0.7" y="0.7" width="20.6" height="20.6" fill="#1d1c22" stroke="#8a898f" stroke-width="1.6"/><rect x="2.4" y="2.4" width="17.2" height="17.2" fill="none" stroke="#3a393f" stroke-width="1"/><rect x="6" y="4.8" width="10" height="12.6" rx="0.6" fill="none" stroke="#ffffff" stroke-width="1.9"/><rect x="8.8" y="8.6" width="4.4" height="5" fill="none" stroke="#ffffff" stroke-width="1.3"/></svg>
<span class="t" style="left:503.00px;top:225px;font-size:15.70px;color:#f4f3f5;line-height:17px;height:17px;letter-spacing:-0.057px;-webkit-text-stroke:0.42px #f4f3f5;">Safe Area</span>
<svg class="r" style="left:457.20px;top:254.90px;" width="11.60" height="7.00" viewBox="0 0 11 7" preserveAspectRatio="none"><path d="M1 1 L5.5 6 L10 1" fill="none" stroke="#b5b4b9" stroke-width="2" stroke-linecap="round" stroke-linejoin="round"/></svg>
<svg class="r" style="left:476.70px;top:247.20px;" width="22.20" height="21.60" viewBox="0 0 22 22" preserveAspectRatio="none"><rect x="0.7" y="0.7" width="20.6" height="20.6" fill="#050508" stroke="#8a898f" stroke-width="1.6"/><rect x="2.4" y="2.4" width="17.2" height="17.2" fill="none" stroke="#2a292f" stroke-width="1"/><text x="11" y="16.4" font-family="Liberation Sans, sans-serif" font-size="14.5" fill="#3b8df5" text-anchor="middle" stroke="#3b8df5" stroke-width="0.3">B</text></svg>
<span class="t" style="left:503.10px;top:250px;font-size:15.70px;color:#f4f3f5;line-height:17px;height:17px;letter-spacing:-0.054px;-webkit-text-stroke:0.42px #f4f3f5;">Login</span>
<svg class="r" style="left:482.80px;top:276.40px;" width="7.40" height="11.60" viewBox="0 0 7 11" preserveAspectRatio="none"><path d="M1 1 L6 5.5 L1 10" fill="none" stroke="#a5a4aa" stroke-width="2" stroke-linecap="round" stroke-linejoin="round"/></svg>
<svg class="r" style="left:500.30px;top:272.50px;" width="19.60" height="19.50" viewBox="0 0 20 20" preserveAspectRatio="none"><rect x="0.5" y="0.5" width="19" height="19" rx="3.2" fill="#17161b" stroke="#55545b" stroke-width="1"/><rect x="2.7" y="2.7" width="14.6" height="14.6" rx="0.8" fill="#04060c" stroke="#1a8cff" stroke-width="1.9"/><g stroke="#1a8cff" stroke-width="1.7"><path d="M10 4.6 L10 8.4"/><path d="M10 11.6 L10 15.4"/><path d="M4.6 10 L8.4 10"/><path d="M11.6 10 L15.4 10"/></g><rect x="9.2" y="9.2" width="1.6" height="1.6" fill="#1a8cff"/></svg>
<span class="t" style="left:524.60px;top:274px;font-size:15.70px;color:#f4f3f5;line-height:17px;height:17px;letter-spacing:0.199px;-webkit-text-stroke:0.42px #f4f3f5;">Constraints</span>
<svg class="r" style="left:460.80px;top:301.00px;" width="7.40" height="11.60" viewBox="0 0 7 11" preserveAspectRatio="none"><path d="M1 1 L6 5.5 L1 10" fill="none" stroke="#a5a4aa" stroke-width="2" stroke-linecap="round" stroke-linejoin="round"/></svg>
<svg class="r" style="left:478.40px;top:297.00px;" width="19.60" height="19.60" viewBox="0 0 20 20" preserveAspectRatio="none"><rect x="0.5" y="0.5" width="19" height="19" rx="3.2" fill="#17161b" stroke="#55545b" stroke-width="1"/><rect x="2.7" y="2.7" width="14.6" height="14.6" rx="0.8" fill="#04060c" stroke="#1a8cff" stroke-width="1.9"/><g stroke="#1a8cff" stroke-width="1.7"><path d="M10 4.6 L10 8.4"/><path d="M10 11.6 L10 15.4"/><path d="M4.6 10 L8.4 10"/><path d="M11.6 10 L15.4 10"/></g><rect x="9.2" y="9.2" width="1.6" height="1.6" fill="#1a8cff"/></svg>
<span class="t" style="left:503.00px;top:299px;font-size:15.70px;color:#f4f3f5;line-height:17px;height:17px;letter-spacing:0.209px;-webkit-text-stroke:0.42px #f4f3f5;">Constraints</span>
<svg class="r" style="left:455.00px;top:321.20px;" width="21.90" height="21.70" viewBox="0 0 22 22" preserveAspectRatio="none"><rect x="0.7" y="0.7" width="20.6" height="20.6" fill="#050508" stroke="#8a898f" stroke-width="1.6"/><rect x="2.4" y="2.4" width="17.2" height="17.2" fill="none" stroke="#2a292f" stroke-width="1"/><path d="M13.6 5.4 L7.8 11 L13.6 16.6" fill="none" stroke="#3b8df5" stroke-width="2" stroke-linecap="round" stroke-linejoin="round"/></svg>
<span class="t" style="left:481.00px;top:323px;font-size:15.70px;color:#f4f3f5;line-height:17px;height:17px;letter-spacing:0.158px;-webkit-text-stroke:0.42px #f4f3f5;">Navigation Item</span>
<svg class="r" style="left:433.20px;top:345.40px;" width="20.90" height="22.40" viewBox="0 0 21 22.6" preserveAspectRatio="none"><path d="M10.5 1 L19.8 6 L19.8 16.4 L10.5 21.6 L1.2 16.4 L1.2 6 Z" fill="#5a3d0e" stroke="#eda41c" stroke-width="1.7" stroke-linejoin="round"/><path d="M10.5 1 L19.8 6 L10.5 11 L1.2 6 Z" fill="#7a5414" stroke="#eda41c" stroke-width="1.4" stroke-linejoin="round"/><path d="M10.5 11 L10.5 21.6" stroke="#eda41c" stroke-width="1.5"/><path d="M3.6 9.2 L7.8 11.4 L7.8 16.8 L3.6 14.6 Z" fill="#d8d0c0"/><path d="M4.8 11 L6.6 12 L6.6 14.8 L4.8 13.8 Z" fill="#7a5414"/><path d="M13.2 11.4 L17.4 9.2 L17.4 14.6 L13.2 16.8 Z" fill="#5a3d0e"/><path d="M14.2 12.6 L16 11.2 L16 15.4" fill="none" stroke="#ffffff" stroke-width="1.5"/></svg>
<span class="t" style="left:459.10px;top:348px;font-size:15.70px;color:#f4f3f5;line-height:17px;height:17px;letter-spacing:0.086px;-webkit-text-stroke:0.42px #f4f3f5;">First Responder</span>
<svg class="r" style="left:433.00px;top:370.10px;" width="22.10" height="21.90" viewBox="0 0 22 22" preserveAspectRatio="none"><rect x="0.8" y="0.8" width="20.4" height="20.4" rx="0.6" fill="#6a4a12" stroke="#eda41c" stroke-width="1.6"/><path d="M13.4 8 L13.4 5 L5 5 L5 17 L13.4 17 L13.4 14" fill="#7a5719" stroke="#ffffff" stroke-width="1.7" stroke-linejoin="miter"/><path d="M9.4 11 L17 11" stroke="#ffffff" stroke-width="1.7"/><path d="M15 7.8 L18.6 11 L15 14.2 Z" fill="#ffffff"/></svg>
<span class="t" style="left:459.10px;top:373px;font-size:15.70px;color:#f4f3f5;line-height:17px;height:17px;letter-spacing:-0.091px;-webkit-text-stroke:0.42px #f4f3f5;">Exit</span>
<div class="r" style="left:387.00px;top:399.00px;width:340.00px;height:1.30px;background:#55545a;"></div>
<svg class="r" style="left:395.10px;top:410.40px;" width="7.40" height="11.60" viewBox="0 0 7 11" preserveAspectRatio="none"><path d="M1 1 L6 5.5 L1 10" fill="none" stroke="#a5a4aa" stroke-width="2" stroke-linecap="round" stroke-linejoin="round"/></svg>
<svg class="r" style="left:412.00px;top:406.70px;" width="20.10" height="19.50" viewBox="0 0 20 20" preserveAspectRatio="none"><rect x="0.3" y="0.3" width="19.4" height="19.4" rx="3" fill="#f4b620"/><rect x="2" y="6" width="16" height="12" rx="1" fill="#3a2c14"/><g stroke="#fff3d0" stroke-width="1.5"><path d="M3.2 4.8 L5.8 1.6"/><path d="M7.4 4.8 L10 1.6"/><path d="M11.6 4.8 L14.2 1.6"/><path d="M15.8 4.8 L18.4 1.6"/></g><path d="M5 12 L8 9 L15.6 9 L15.6 15 L8 15 Z" fill="#ffffff"/></svg>
<span class="t" style="left:437.30px;top:407px;font-size:16.90px;color:#f4f3f5;line-height:19px;height:19px;font-weight:700;letter-spacing:-0.689px;">Navigation Controller Scene</span>
<div class="r" style="left:379.40px;top:846.90px;width:353.10px;height:30.00px;background:#5b595e;border-radius:7.5px;"></div>
<svg class="r" style="left:386.10px;top:852.20px;" width="18.80" height="18.80" viewBox="0 0 20 20" preserveAspectRatio="none"><circle cx="10" cy="10" r="8.4" fill="none" stroke="#f6f5f7" stroke-width="1.92513"/><g stroke="#f6f5f7" stroke-width="1.7" stroke-linecap="round"><path d="M5.4 7.4 L14.6 7.4"/><path d="M6.9 10.3 L13.1 10.3"/><path d="M8.5 13.2 L11.5 13.2"/></g></svg>
<span class="t" style="left:409.40px;top:852px;font-size:16.90px;color:#a3a2a7;line-height:19px;height:19px;letter-spacing:-0.591px;">Filter</span>
<div class="r" style="left:741.5px;top:128px;width:869.5px;height:711px;overflow:hidden">
<div class="r" style="left:-741.5px;top:-128px;width:2000px;height:1221px">
<div class="r" style="left:736.00px;top:213.20px;width:199.80px;height:18.40px;background:#2a2732;border:1px solid #504e57;border-radius:3px;"></div>
<span class="t" style="left:777.80px;top:218px;font-size:7.40px;color:#e4e3e7;line-height:9px;height:9px;font-weight:700;letter-spacing:-0.042px;">Navigation Controller</span>
<div class="r" style="left:730.00px;top:237.60px;width:205.00px;height:517.40px;background:#ebebeb;border-radius:0 22px 22px 0;box-shadow:0 0 0 1px rgba(8,8,8,0.6);"></div>
<svg class="r" style="left:750.40px;top:237.60px;" width="129.20" height="18.00" viewBox="0 0 129.2 18" preserveAspectRatio="none"><path d="M0 0 L129.2 0 C126.2 0 124.6 1 124.6 4 L124.6 7.5 C124.6 13.6 120.2 17.6 114.6 17.6 L14.6 17.6 C9 17.6 4.6 13.6 4.6 7.5 L4.6 4 C4.6 1 3 0 0 0 Z" fill="#000"/></svg>
<div class="r" style="left:773.00px;top:748.40px;width:84.50px;height:2.50px;background:#101010;border-radius:1.2px;"></div>
<span class="t" style="left:805.20px;top:271px;font-size:9.60px;color:#111;line-height:11px;height:11px;font-weight:700;letter-spacing:0.160px;">Title</span>
<span class="t" style="left:736.60px;top:503px;font-size:16.40px;color:#9b9b9d;line-height:18px;height:18px;letter-spacing:0.123px;">Navigation Controller</span>
<div class="r" style="left:935.60px;top:495.80px;width:120.40px;height:1.60px;background:#6f6f73;"></div>
<div class="r" style="left:987.60px;top:488.20px;width:17.00px;height:17.00px;background:#424242;border-radius:50%;border:1.4px solid #6f6f73;"></div>
<svg class="r" style="left:991.10px;top:491.70px;" width="10.00" height="10.00" viewBox="0 0 10 10" preserveAspectRatio="none"><circle cx="2.8" cy="2.8" r="1.5" fill="none" stroke="#77777b" stroke-width="1.1"/><circle cx="7.2" cy="7.2" r="1.5" fill="none" stroke="#77777b" stroke-width="1.1"/><path d="M3.8 3.8 L6.2 6.2" stroke="#77777b" stroke-width="1.2"/></svg>
<svg class="r" style="left:1045.00px;top:487.00px;" width="12.50" height="19.40" viewBox="0 0 12.5 19.4" preserveAspectRatio="none"><path d="M1 1 L11 9.7 L1 18.4" fill="none" stroke="#6f6f73" stroke-width="1.6"/></svg>
<div class="r" style="left:1056.50px;top:213.20px;width:240.60px;height:18.40px;background:#2a2732;border:1px solid #504e57;border-radius:3px;"></div>
<svg class="r" style="left:1150.80px;top:217.00px;" width="10.80" height="10.80" viewBox="0 0 10.8 10.8" preserveAspectRatio="none"><circle cx="5.4" cy="5.4" r="4.6" fill="#3b2c12" stroke="#d8931c" stroke-width="1.3"/><rect x="3.1" y="3.2" width="4.6" height="4.4" fill="#fff"/></svg>
<svg class="r" style="left:1172.40px;top:216.80px;" width="10.00" height="11.20" viewBox="0 0 10 11.2" preserveAspectRatio="none"><path d="M5 0.6 L9.4 3 L9.4 8.2 L5 10.6 L0.6 8.2 L0.6 3 Z" fill="#c98c26" stroke="#e39b1f" stroke-width="0.9"/><path d="M3 4.4 L5 5.4 L7 4.4 M5 5.4 L5 8" stroke="#8a6a3a" stroke-width="0.8" fill="none"/></svg>
<svg class="r" style="left:1194.00px;top:217.40px;" width="10.00" height="10.00" viewBox="0 0 10 10" preserveAspectRatio="none"><rect x="0.5" y="0.5" width="9" height="9" fill="#9a6a1c" stroke="#e39b1f" stroke-width="0.9"/><path d="M6 3.6 L6 2.6 L2.6 2.6 L2.6 7.4 L6 7.4 L6 6.4" fill="none" stroke="#f0e6d4" stroke-width="1"/><path d="M4.4 5 L8 5" stroke="#f0e6d4" stroke-width="1"/></svg>
<div class="r" style="left:1057.50px;top:237.60px;width:239.40px;height:517.40px;background:#ffffff;border-radius:22px;box-shadow:0 0 0 1px rgba(8,8,8,0.6);"></div>
<svg class="r" style="left:1112.40px;top:237.60px;" width="129.40" height="18.00" viewBox="0 0 129.4 18" preserveAspectRatio="none"><path d="M0 0 L129.4 0 C126.4 0 124.8 1 124.8 4 L124.8 7.5 C124.8 13.6 120.4 17.6 114.8 17.6 L14.6 17.6 C9 17.6 4.6 13.6 4.6 7.5 L4.6 4 C4.6 1 3 0 0 0 Z" fill="#000"/></svg>
<div class="r" style="left:1134.40px;top:748.40px;width:85.60px;height:2.50px;background:#101010;border-radius:1.2px;"></div>
<div class="r" style="left:1283.00px;top:262.00px;width:13.60px;height:466.00px;background:linear-gradient(to right,rgba(240,240,244,0),rgba(236,236,240,0.3));"></div>
<div class="r" style="left:1175.80px;top:238.60px;width:1.60px;height:516.40px;background:#2a7fd2;"></div>
<div class="r" style="left:1057.50px;top:495.70px;width:239.40px;height:1.50px;background:#2a7fd2;"></div>
<span class="t" style="left:1166.70px;top:492px;font-size:7.40px;color:#86b4f0;line-height:9px;height:9px;letter-spacing:0.498px;">Login</span>
<div class="r" style="left:1207.00px;top:482.50px;width:1.40px;height:27.50px;background:#2f6fc2;"></div>
<div class="r" style="left:1204.00px;top:481.80px;width:8.60px;height:1.40px;background:#3d82d6;"></div>
<div class="r" style="left:1204.00px;top:509.30px;width:8.60px;height:1.60px;background:#5b8fd0;"></div>
<div class="r" style="left:1154.40px;top:519.90px;width:43.80px;height:2.00px;background:#5b8fd2;"></div>
<div class="r" style="left:1154.00px;top:516.30px;width:1.30px;height:9.20px;background:#1f74d0;"></div>
<div class="r" style="left:1197.60px;top:516.30px;width:1.30px;height:9.20px;background:#1f74d0;"></div>
<div class="r" style="left:1150.00px;top:478.10px;width:9.00px;height:9.00px;background:rgba(255,255,255,0.92);border:1.1px solid #26262a;box-shadow:0 0.6px 0.8px rgba(0,0,0,0.35);"></div>
<div class="r" style="left:1150.00px;top:491.90px;width:9.00px;height:9.00px;background:rgba(255,255,255,0.92);border:1.1px solid #26262a;box-shadow:0 0.6px 0.8px rgba(0,0,0,0.35);"></div>
<div class="r" style="left:1150.00px;top:505.50px;width:9.00px;height:9.00px;background:rgba(255,255,255,0.92);border:1.1px solid #26262a;box-shadow:0 0.6px 0.8px rgba(0,0,0,0.35);"></div>
<div class="r" style="left:1171.90px;top:478.10px;width:9.00px;height:9.00px;background:rgba(255,255,255,0.92);border:1.1px solid #26262a;box-shadow:0 0.6px 0.8px rgba(0,0,0,0.35);"></div>
<div class="r" style="left:1171.90px;top:505.50px;width:9.00px;height:9.00px;background:rgba(255,255,255,0.92);border:1.1px solid #26262a;box-shadow:0 0.6px 0.8px rgba(0,0,0,0.35);"></div>
<div class="r" style="left:1195.00px;top:478.10px;width:9.00px;height:9.00px;background:rgba(255,255,255,0.92);border:1.1px solid #26262a;box-shadow:0 0.6px 0.8px rgba(0,0,0,0.35);"></div>
<div class="r" style="left:1195.00px;top:491.90px;width:9.00px;height:9.00px;background:rgba(255,255,255,0.92);border:1.1px solid #26262a;box-shadow:0 0.6px 0.8px rgba(0,0,0,0.35);"></div>
<div class="r" style="left:1195.00px;top:505.50px;width:9.00px;height:9.00px;background:rgba(255,255,255,0.92);border:1.1px solid #26262a;box-shadow:0 0.6px 0.8px rgba(0,0,0,0.35);"></div>
<div class="r" style="left:1306.80px;top:157.40px;width:275.80px;height:244.40px;background:#555458;border-radius:8px;border:1px solid #77767a;box-shadow:0 1px 16px 5px rgba(0,0,0,0.22);overflow:hidden;"></div>
<div class="r" style="left:1307.80px;top:158.40px;width:36.80px;height:242.40px;background:#3a393c;border-radius:7px 0 0 7px;"></div>
<div class="r" style="left:1344.20px;top:158.40px;width:1.00px;height:242.40px;background:#86858a;"></div>
<div class="r" style="left:1328.00px;top:179.00px;width:90.50px;height:197.00px;background:#ebebeb;border-radius:7px;"></div>
<div class="r" style="left:1328.00px;top:179.00px;width:16.60px;height:197.00px;background:#7d7c80;border-radius:7px 0 0 7px;"></div>
<div class="r" style="left:1350.00px;top:179.00px;width:46.00px;height:6.40px;background:#000;border-radius:0 0 3px 3px;"></div>
<span class="t" style="left:1369.20px;top:191px;font-size:3.20px;color:#222;line-height:4px;height:4px;font-weight:700;letter-spacing:0.320px;">Title</span>
<span class="t" style="left:1343.00px;top:280px;font-size:6.50px;color:#9b9b9b;line-height:7px;height:7px;letter-spacing:-0.010px;">Navigation Controller</span>
<div class="r" style="left:1466.00px;top:179.00px;width:91.00px;height:197.00px;background:#ffffff;border-radius:7px;"></div>
<div class="r" style="left:1488.00px;top:179.00px;width:47.00px;height:6.40px;background:#000;border-radius:0 0 3px 3px;"></div>
<div class="r" style="left:1506.50px;top:277.20px;width:5.50px;height:1.00px;background:#5fa0ea;"></div>
</div></div>
<svg class="r" style="left:753.80px;top:850.50px;" width="18.20" height="18.30" viewBox="0 0 18.2 18.3" preserveAspectRatio="none"><rect x="0.8" y="0.8" width="16.6" height="16.7" rx="3" fill="none" stroke="#a3a2a8" stroke-width="1.6"/><rect x="3.2" y="3.2" width="4.6" height="11.9" rx="0.8" fill="#a3a2a8"/></svg>
<svg class="r" style="left:785.20px;top:849.80px;" width="19.60" height="19.60" viewBox="0 0 19.6 19.6" preserveAspectRatio="none"><circle cx="9.8" cy="9.8" r="8.9" fill="none" stroke="#a3a2a8" stroke-width="1.5"/><circle cx="9.8" cy="5.4" r="1.5" fill="#a3a2a8"/><path d="M4.8 7.6 L9.8 8.6 L14.8 7.6 M9.8 8.6 L9.8 11.4 M9.8 11.4 L7.4 15.6 M9.8 11.4 L12.2 15.6" fill="none" stroke="#a3a2a8" stroke-width="1.5" stroke-linecap="round" stroke-linejoin="round"/></svg>
<svg class="r" style="left:820.60px;top:849.60px;" width="20.00" height="20.00" viewBox="0 0 20 20" preserveAspectRatio="none"><circle cx="10" cy="10" r="10" fill="#0f80ff"/><path d="M10 3.4 A6.6 6.6 0 0 1 10 16.6" fill="none" stroke="#1a1f33" stroke-width="1.3"/><path d="M10 6.5 A3.5 3.5 0 0 0 10 13.5 Z" fill="#1a1f33"/><path d="M10 3.4 L10 16.6" stroke="#1a1f33" stroke-width="0.7"/></svg>
<svg class="r" style="left:856.60px;top:848.60px;" width="19.60" height="20.40" viewBox="0 0 19.6 20.4" preserveAspectRatio="none"><rect x="0.9" y="7.2" width="13.2" height="12.2" rx="1.6" fill="none" stroke="#a3a2a8" stroke-width="1.6"/><path d="M12.2 2.6 Q17.6 2.6 17.6 8.6" fill="none" stroke="#a3a2a8" stroke-width="1.5" stroke-linecap="round"/><path d="M14.4 0.6 L11.8 2.7 L14.4 4.9" fill="none" stroke="#a3a2a8" stroke-width="1.4" stroke-linecap="round" stroke-linejoin="round"/></svg>
<svg class="r" style="left:890.00px;top:850.50px;" width="17.60" height="18.10" viewBox="0 0 17.6 18.1" preserveAspectRatio="none"><rect x="0.8" y="0.8" width="16" height="16.5" rx="2.4" fill="none" stroke="#56555c" stroke-width="1.5"/><path d="M8.8 1 L8.8 17.2" stroke="#56555c" stroke-width="1.5"/></svg>
<svg class="r" style="left:928.80px;top:850.00px;" width="12.60" height="19.60" viewBox="0 0 12.6 19.6" preserveAspectRatio="none"><rect x="0.8" y="0.8" width="11" height="18" rx="2.4" fill="none" stroke="#a3a2a8" stroke-width="1.6"/><path d="M4.2 2.8 L8.4 2.8" stroke="#a3a2a8" stroke-width="1.4" stroke-linecap="round"/><path d="M3.4 16.6 L9.2 16.6" stroke="#a3a2a8" stroke-width="1" /></svg>
<span class="t" style="left:960.50px;top:851px;font-size:15.90px;color:#b6b5ba;line-height:17px;height:17px;letter-spacing:-0.316px;">iPhone 11 Pro Max</span>
<svg class="r" style="left:1119.50px;top:849.00px;" width="20.00" height="20.50" viewBox="0 0 20 20.5" preserveAspectRatio="none"><circle cx="8" cy="8" r="6.8" fill="none" stroke="#a3a2a8" stroke-width="1.5"/><path d="M13 13 L18.6 19" stroke="#a3a2a8" stroke-width="1.7" stroke-linecap="round"/><path d="M4.8 8 L11.2 8" stroke="#a3a2a8" stroke-width="1.4" stroke-linecap="round"/></svg>
<span class="t" style="left:1160.00px;top:851px;font-size:15.90px;color:#b6b5ba;line-height:17px;height:17px;letter-spacing:0.088px;">42%</span>
<svg class="r" style="left:1210.80px;top:849.00px;" width="20.00" height="20.50" viewBox="0 0 20 20.5" preserveAspectRatio="none"><circle cx="8" cy="8" r="6.8" fill="none" stroke="#a3a2a8" stroke-width="1.5"/><path d="M13 13 L18.6 19" stroke="#a3a2a8" stroke-width="1.7" stroke-linecap="round"/><path d="M4.8 8 L11.2 8" stroke="#a3a2a8" stroke-width="1.4" stroke-linecap="round"/><path d="M8 4.8 L8 11.2" stroke="#a3a2a8" stroke-width="1.4" stroke-linecap="round"/></svg>
<svg class="r" style="left:1429.50px;top:848.50px;" width="21.50" height="21.00" viewBox="0 0 21.5 21" preserveAspectRatio="none"><g fill="none" stroke="#a3a2a8" stroke-width="1.5" stroke-linecap="round"><path d="M1 5 L1 1 L5 1 M16.5 1 L20.5 1 L20.5 5 M20.5 16 L20.5 20 L16.5 20 M5 20 L1 20 L1 16"/><path d="M7 15.2 A5.8 5.8 0 1 1 12 16.2 L8.4 16.2"/><path d="M10.6 13.6 L8 16.2 L10.6 18.8" stroke-linejoin="round"/></g></svg>
<svg class="r" style="left:1465.50px;top:849.50px;" width="21.50" height="20.00" viewBox="0 0 21.5 20" preserveAspectRatio="none"><path d="M1 0.8 L1 19.2" stroke="#a3a2a8" stroke-width="1.6" stroke-linecap="round"/><rect x="3.8" y="3.6" width="12.6" height="5.2" rx="0.8" fill="none" stroke="#a3a2a8" stroke-width="1.5"/><rect x="3.8" y="11.4" width="16.8" height="5.6" rx="0.8" fill="none" stroke="#a3a2a8" stroke-width="1.5"/></svg>
<svg class="r" style="left:1500.50px;top:848.50px;" width="21.50" height="21.00" viewBox="0 0 21.5 21.4" preserveAspectRatio="none"><rect x="7" y="7" width="7.6" height="7.6" fill="none" stroke="#a3a2a8" stroke-width="1.5"/><g stroke="#a3a2a8" stroke-width="1.4" stroke-linecap="round"><path d="M10.8 1 L10.8 5.2 M8.6 1 L13 1"/><path d="M10.8 16.4 L10.8 20.4 M8.6 20.4 L13 20.4"/><path d="M1 10.8 L5.2 10.8 M1 8.6 L1 13"/><path d="M16.4 10.8 L20.6 10.8 M20.6 8.6 L20.6 13"/></g></svg>
<svg class="r" style="left:1536.50px;top:852.60px;" width="21.50" height="13.80" viewBox="0 0 21.5 13.8" preserveAspectRatio="none"><path d="M10.75 1.2 L16.4 12.6 L5.1 12.6 Z" fill="none" stroke="#a3a2a8" stroke-width="1.5" stroke-linejoin="round"/><circle cx="10.75" cy="9" r="1.5" fill="#a3a2a8"/><g stroke="#a3a2a8" stroke-width="1.4" stroke-linecap="round"><path d="M1 5 L1 9.6 M1 7.3 L4.6 7.3"/><path d="M20.5 5 L20.5 9.6 M16.9 7.3 L20.5 7.3"/></g></svg>
<svg class="r" style="left:1575.00px;top:849.60px;" width="21.20" height="20.00" viewBox="0 0 21.2 20" preserveAspectRatio="none"><path d="M7 3.4 L1 3.4 L1 19.2 L20.2 19.2 L20.2 3.4 L14.2 3.4" fill="none" stroke="#a3a2a8" stroke-width="1.6" stroke-linejoin="miter"/><path d="M10.6 0.8 L10.6 13.4 M5.8 8.8 L10.6 13.6 L15.4 8.8" fill="none" stroke="#a3a2a8" stroke-width="1.5" stroke-linecap="round" stroke-linejoin="round"/></svg>
<svg class="r" style="left:388.20px;top:892.60px;" width="21.40" height="13.80" viewBox="0 0 20 12.2" preserveAspectRatio="none"><path d="M2 0 L14.6 0 Q15.6 0 16.3 0.7 L19.6 5 Q20.2 6.1 19.6 7.2 L16.3 11.5 Q15.6 12.2 14.6 12.2 L2 12.2 Q0 12.2 0 10.2 L0 2 Q0 0 2 0 Z" fill="#0a7aff"/></svg>
<svg class="r" style="left:1575.50px;top:890.50px;" width="18.50" height="18.00" viewBox="0 0 18.5 18" preserveAspectRatio="none"><rect x="0.8" y="0.8" width="16.9" height="16.4" rx="3.2" fill="none" stroke="#a3a2a8" stroke-width="1.6"/><rect x="3.2" y="11.4" width="12.1" height="3.4" rx="1.2" fill="#a3a2a8"/></svg>
<span class="t" style="left:384.00px;top:1193px;font-size:15.40px;color:#f2f1f4;line-height:17px;height:17px;letter-spacing:0.106px;-webkit-text-stroke:0.42px #f2f1f4;">Auto</span>
<svg class="r" style="left:422.00px;top:1197.00px;" width="7.60" height="10.20" viewBox="0 0 7.6 10.2" preserveAspectRatio="none"><path d="M0.9 3.7 L3.8 0.9 L6.7 3.7 M0.9 6.5 L3.8 9.3 L6.7 6.5" fill="none" stroke="#d6d5d9" stroke-width="1.6" stroke-linecap="round" stroke-linejoin="round"/></svg>
<div class="r" style="left:442.50px;top:1194.40px;width:1.20px;height:15.60px;background:#45434b;"></div>
<svg class="r" style="left:456.00px;top:1195.40px;" width="21.00" height="13.80" viewBox="0 0 21 13.8" preserveAspectRatio="none"><path d="M0.8 6.9 C4 1.6 8 0.8 10.5 0.8 C13 0.8 17 1.6 20.2 6.9 C17 12.2 13 13 10.5 13 C8 13 4 12.2 0.8 6.9 Z" fill="none" stroke="#6b6a71" stroke-width="1.5"/><circle cx="10.5" cy="6.9" r="3.5" fill="#6b6a71"/><circle cx="10.5" cy="6.9" r="1.2" fill="#231e2a"/></svg>
<svg class="r" style="left:494.20px;top:1193.20px;" width="18.40" height="18.40" viewBox="0 0 18.4 18.4" preserveAspectRatio="none"><circle cx="9.2" cy="9.2" r="8.3" fill="none" stroke="#6b6a71" stroke-width="1.4"/><circle cx="9.2" cy="5.2" r="1.1" fill="#6b6a71"/><path d="M7.6 8 L9.5 8 L9.5 13.4 M7.2 13.6 L11.6 13.6" fill="none" stroke="#6b6a71" stroke-width="1.3"/></svg>
<div class="r" style="left:790.60px;top:1186.50px;width:237.00px;height:30.60px;background:#2c2a32;border:1px solid #47454c;border-radius:8px;"></div>
<svg class="r" style="left:797.00px;top:1192.20px;" width="18.80" height="18.80" viewBox="0 0 20 20" preserveAspectRatio="none"><circle cx="10" cy="10" r="8.4" fill="none" stroke="#f4f3f6" stroke-width="1.92513"/><g stroke="#f4f3f6" stroke-width="1.7" stroke-linecap="round"><path d="M5.4 7.4 L14.6 7.4"/><path d="M6.9 10.3 L13.1 10.3"/><path d="M8.5 13.2 L11.5 13.2"/></g></svg>
<span class="t" style="left:821.30px;top:1193px;font-size:16.90px;color:#77767c;line-height:19px;height:19px;letter-spacing:-0.571px;">Filter</span>
<span class="t" style="left:1046.30px;top:1193px;font-size:15.40px;color:#f2f1f4;line-height:17px;height:17px;letter-spacing:0.453px;-webkit-text-stroke:0.42px #f2f1f4;">All Output</span>
<svg class="r" style="left:1122.40px;top:1197.00px;" width="7.60" height="10.20" viewBox="0 0 7.6 10.2" preserveAspectRatio="none"><path d="M0.9 3.7 L3.8 0.9 L6.7 3.7 M0.9 6.5 L3.8 9.3 L6.7 6.5" fill="none" stroke="#d6d5d9" stroke-width="1.6" stroke-linecap="round" stroke-linejoin="round"/></svg>
<div class="r" style="left:1260.90px;top:1186.50px;width:234.80px;height:30.60px;background:#343239;border:1px solid #4b4950;border-radius:8px;"></div>
<svg class="r" style="left:1267.10px;top:1192.20px;" width="18.80" height="18.80" viewBox="0 0 20 20" preserveAspectRatio="none"><circle cx="10" cy="10" r="8.4" fill="none" stroke="#f4f3f6" stroke-width="1.92513"/><g stroke="#f4f3f6" stroke-width="1.7" stroke-linecap="round"><path d="M5.4 7.4 L14.6 7.4"/><path d="M6.9 10.3 L13.1 10.3"/><path d="M8.5 13.2 L11.5 13.2"/></g></svg>
<span class="t" style="left:1291.30px;top:1193px;font-size:16.90px;color:#7d7c82;line-height:19px;height:19px;letter-spacing:-0.471px;">Filter</span>
<svg class="r" style="left:1512.00px;top:1192.20px;" width="15.20" height="19.40" viewBox="0 0 15.2 19.4" preserveAspectRatio="none"><path d="M0.8 3.6 L14.4 3.6 M5 3.4 L5.4 1.2 Q5.6 0.7 6.2 0.7 L9 0.7 Q9.6 0.7 9.8 1.2 L10.2 3.4" fill="none" stroke="#9d9ca2" stroke-width="1.4" stroke-linecap="round"/><path d="M2.2 5 L3 17.4 Q3.1 18.6 4.3 18.6 L10.9 18.6 Q12.1 18.6 12.2 17.4 L13 5 Z" fill="none" stroke="#9d9ca2" stroke-width="1.4"/><path d="M5.2 6.8 L5.5 16.4 M7.6 6.8 L7.6 16.4 M10 6.8 L9.7 16.4" stroke="#9d9ca2" stroke-width="1.2" stroke-linecap="round"/></svg>
<div class="r" style="left:1538.80px;top:1194.40px;width:1.20px;height:15.60px;background:#45434b;"></div>
<svg class="r" style="left:1551.20px;top:1192.40px;" width="18.00" height="17.80" viewBox="0 0 18 17.8" preserveAspectRatio="none"><rect x="0.8" y="0.8" width="16.4" height="16.2" rx="3" fill="none" stroke="#1a84ff" stroke-width="1.6"/><rect x="3" y="3" width="3.6" height="11.8" rx="0.8" fill="#1a84ff"/></svg>
<svg class="r" style="left:1580.00px;top:1192.40px;" width="18.20" height="17.80" viewBox="0 0 18.2 17.8" preserveAspectRatio="none"><rect x="0.8" y="0.8" width="16.6" height="16.2" rx="3" fill="none" stroke="#1a84ff" stroke-width="1.6"/><rect x="11.6" y="3" width="3.6" height="11.8" rx="0.8" fill="#1a84ff"/></svg>
<svg class="r" style="left:1952.60px;top:14.90px;" width="27.20" height="21.00" viewBox="0 0 27.2 21" preserveAspectRatio="none"><rect x="1" y="1" width="25.2" height="19" rx="3.8" fill="none" stroke="#a3a2a8" stroke-width="1.9"/><path d="M17.4 1 L17.4 20" stroke="#a3a2a8" stroke-width="1.9"/><g stroke="#a3a2a8" stroke-width="1.4"><path d="M19.8 5.5 L23.4 5.5"/><path d="M19.8 8.6 L23.4 8.6"/><path d="M19.8 11.7 L23.4 11.7"/></g></svg>
<svg class="r" style="left:1676.50px;top:62.50px;" width="14.90" height="18.00" viewBox="0 0 14.9 18" preserveAspectRatio="none"><path d="M3 0.9 L8.4 0.9 L14 6.6 L14 15.2 Q14 17.1 12.1 17.1 L2.8 17.1 Q0.9 17.1 0.9 15.2 L0.9 3 Q0.9 0.9 3 0.9 Z" fill="none" stroke="#9f9ea4" stroke-width="1.7" stroke-linejoin="round"/><path d="M8.4 1 L8.4 5 Q8.4 6.6 10 6.6 L13.8 6.6" fill="none" stroke="#9f9ea4" stroke-width="1.5"/></svg>
<svg class="r" style="left:1714.00px;top:61.70px;" width="19.60" height="19.60" viewBox="0 0 19.6 19.6" preserveAspectRatio="none"><circle cx="9.8" cy="9.8" r="8.8" fill="none" stroke="#9f9ea4" stroke-width="1.7"/><path d="M10.2 4.6 L10.2 10.4 L5.4 10.4" fill="none" stroke="#9f9ea4" stroke-width="1.7" stroke-linecap="round" stroke-linejoin="round"/></svg>
<svg class="r" style="left:1755.20px;top:61.70px;" width="19.60" height="19.60" viewBox="0 0 19.6 19.6" preserveAspectRatio="none"><circle cx="9.8" cy="9.8" r="8.8" fill="none" stroke="#9f9ea4" stroke-width="1.7"/><path d="M7 7.6 Q7 4.9 9.8 4.9 Q12.6 4.9 12.6 7.4 Q12.6 9 10.9 9.8 Q9.8 10.4 9.8 11.8" fill="none" stroke="#9f9ea4" stroke-width="1.7" stroke-linecap="round"/><circle cx="9.8" cy="14.6" r="1.1" fill="#9f9ea4"/></svg>
<svg class="r" style="left:1797.20px;top:64.00px;" width="18.00" height="15.80" viewBox="0 0 18 15.8" preserveAspectRatio="none"><rect x="0" y="0" width="18" height="15.8" rx="2.6" fill="#0a84ff"/><rect x="3" y="3.4" width="5" height="5" fill="none" stroke="#182846" stroke-width="1.2"/><g stroke="#182846" stroke-width="1.2"><path d="M10 3.6 L15 3.6"/><path d="M10 6 L15 6"/><path d="M10 8.4 L15 8.4"/><path d="M3 11.6 L15 11.6"/></g></svg>
<svg class="r" style="left:1838.00px;top:62.30px;" width="17.80" height="19.00" viewBox="0 0 17.8 19" preserveAspectRatio="none"><g stroke="#9f9ea4" stroke-width="1.5" stroke-linecap="round"><path d="M0.8 2.4 L17 2.4"/><path d="M0.8 9.5 L17 9.5"/><path d="M0.8 16.6 L17 16.6"/></g><circle cx="12.7" cy="2.4" r="2" fill="#231e2a" stroke="#9f9ea4" stroke-width="1.4"/><circle cx="3.6" cy="9.5" r="2" fill="#231e2a" stroke="#9f9ea4" stroke-width="1.4"/><circle cx="12.7" cy="16.6" r="2" fill="#231e2a" stroke="#9f9ea4" stroke-width="1.4"/></svg>
<svg class="r" style="left:1878.20px;top:64.00px;" width="17.40" height="16.60" viewBox="0 0 17.4 16.6" preserveAspectRatio="none"><path d="M1 1.6 L1 15.6 L16.2 15.6 Z" fill="none" stroke="#9f9ea4" stroke-width="1.7" stroke-linejoin="round"/><path d="M4.6 8.6 L4.6 12.4 L8.8 12.4 Z" fill="none" stroke="#9f9ea4" stroke-width="1.4" stroke-linejoin="round"/></svg>
<svg class="r" style="left:1919.40px;top:62.80px;" width="19.00" height="18.00" viewBox="0 0 19 18" preserveAspectRatio="none"><path d="M14.8 3.6 A7.8 7.8 0 1 0 14.8 14.4" fill="none" stroke="#9f9ea4" stroke-width="1.7" stroke-linecap="round"/><circle cx="9" cy="9" r="3.6" fill="#9f9ea4"/><path d="M12 9 L18 9" stroke="#9f9ea4" stroke-width="1.7" stroke-linecap="round"/></svg>
<span class="t" style="left:1621.60px;top:98px;font-size:16.90px;color:#aeadb2;line-height:19px;height:19px;font-weight:700;letter-spacing:-0.027px;">Custom Class</span>
<span class="t" style="left:1685.60px;top:137px;font-size:15.50px;color:#f3f2f5;line-height:17px;height:17px;letter-spacing:-0.940px;-webkit-text-stroke:0.42px #f3f2f5;">Class</span>
<div class="r" style="left:1728.00px;top:132.00px;width:261.60px;height:21.60px;background:#2d2b34;border:1px solid #44424a;border-radius:5.5px;border-bottom-color:#504e56;"></div>
<span class="t" style="left:1732.40px;top:133px;font-size:17.20px;color:#f3f2f5;line-height:20px;height:20px;letter-spacing:-0.668px;-webkit-text-stroke:0.42px #f3f2f5;">GoogleSignInButton</span>
<svg class="r" style="left:1949.00px;top:135.80px;" width="14.00" height="14.00" viewBox="0 0 14 14" preserveAspectRatio="none"><circle cx="7" cy="7" r="7" fill="#b4b3b8"/><path d="M3.4 7 L10 7 M7.4 4.2 L10.4 7 L7.4 9.8" fill="none" stroke="#2d2b34" stroke-width="1.6" stroke-linecap="round" stroke-linejoin="round"/></svg>
<div class="r" style="left:1971.00px;top:134.40px;width:17.00px;height:16.60px;background:linear-gradient(to bottom,#2375ea,#1561d6);border-radius:4.5px;"></div>
<svg class="r" style="left:1971.00px;top:134.40px;" width="17.00" height="16.60" viewBox="0 0 17 16.6" preserveAspectRatio="none"><path d="M5.8 7.3 L8.5 9.9 L11.2 7.3" fill="none" stroke="#fff" stroke-width="1.8" stroke-linecap="round" stroke-linejoin="round"/></svg>
<div class="r" style="left:1673.6px;top:160px;width:60px;height:30px;overflow:hidden">
<span class="t" style="left:-1.20px;top:7px;font-size:15.50px;color:#f3f2f5;line-height:17px;height:17px;letter-spacing:-0.528px;-webkit-text-stroke:0.42px #f3f2f5;">Module</span>
</div>
<div class="r" style="left:1728.00px;top:162.40px;width:261.60px;height:21.40px;background:#2d2b34;border:1px solid #44424a;border-radius:5.5px;border-bottom-color:#504e56;"></div>
<span class="t" style="left:1732.40px;top:163px;font-size:17.20px;color:#f3f2f5;line-height:20px;height:20px;letter-spacing:-0.973px;-webkit-text-stroke:0.42px #f3f2f5;">Google</span>
<div class="r" style="left:1971.00px;top:164.40px;width:17.00px;height:16.60px;background:linear-gradient(to bottom,#2375ea,#1561d6);border-radius:4.5px;"></div>
<svg class="r" style="left:1971.00px;top:164.40px;" width="17.00" height="16.60" viewBox="0 0 17 16.6" preserveAspectRatio="none"><path d="M5.8 7.3 L8.5 9.9 L11.2 7.3" fill="none" stroke="#fff" stroke-width="1.8" stroke-linecap="round" stroke-linejoin="round"/></svg>
<div class="r" style="left:1684px;top:186px;width:308px;height:19.6px;overflow:hidden">
<div class="r" style="left:-1684px;top:-186px;width:2000px;height:400px">
<div class="r" style="left:1727.00px;top:193.60px;width:16.60px;height:16.60px;background:linear-gradient(to bottom,#403e45,#4e4c53 45%,#5f5d64);border-radius:4.2px;"></div>
<span class="t" style="left:1749.00px;top:193px;font-size:15.90px;color:#f3f2f5;line-height:17px;height:17px;letter-spacing:0.080px;-webkit-text-stroke:0.42px #f3f2f5;">Inherit Module From Target</span>
</div></div>
<div class="r" style="left:1727.60px;top:209.60px;width:15.40px;height:1.60px;background:#3a3840;border-radius:0 0 3px 3px;"></div>
<div class="r" style="left:1680.00px;top:115.60px;width:315.60px;height:93.60px;background:transparent;border:4px solid #ff2b0f;border-radius:9px;"></div>
<div class="r" style="left:1623.00px;top:231.40px;width:366.50px;height:1.20px;background:#3c3a42;"></div>
<span class="t" style="left:1621.60px;top:240px;font-size:16.90px;color:#aeadb2;line-height:19px;height:19px;font-weight:700;letter-spacing:0.444px;">Identity</span>
<span class="t" style="left:1628.00px;top:279px;font-size:15.50px;color:#f3f2f5;line-height:17px;height:17px;letter-spacing:-0.498px;-webkit-text-stroke:0.42px #f3f2f5;">Restoration ID</span>
<div class="r" style="left:1728.00px;top:275.80px;width:261.40px;height:22.00px;background:#2e2c35;border:1px solid #38363e;border-top-color:#34323a;border-bottom-color:#4d4b53;"></div>
<div class="r" style="left:1623.00px;top:315.40px;width:366.50px;height:1.20px;background:#3c3a42;"></div>
<span class="t" style="left:1621.60px;top:325px;font-size:16.90px;color:#aeadb2;line-height:19px;height:19px;font-weight:700;letter-spacing:0.253px;">User Defined Runtime Attributes</span>
<div class="r" style="left:1622.80px;top:352.40px;width:366.40px;height:131.80px;background:#221d29;border:1.4px solid #57555c;"></div>
<div class="r" style="left:1624.20px;top:391.00px;width:363.60px;height:1.00px;background:#46444c;"></div>
<div class="r" style="left:1624.20px;top:459.80px;width:363.60px;height:23.00px;background:#1b1920;"></div>
<div class="r" style="left:1723.00px;top:362.00px;width:1.00px;height:21.00px;background:#4a4850;"></div>
<div class="r" style="left:1815.60px;top:362.00px;width:1.00px;height:21.00px;background:#4a4850;"></div>
<span class="t" style="left:1638.00px;top:364px;font-size:15.50px;color:#f3f2f5;line-height:17px;height:17px;letter-spacing:-0.129px;-webkit-text-stroke:0.42px #f3f2f5;">Key Path</span>
<span class="t" style="left:1730.80px;top:364px;font-size:15.50px;color:#f3f2f5;line-height:17px;height:17px;letter-spacing:0.198px;-webkit-text-stroke:0.42px #f3f2f5;">Type</span>
<span class="t" style="left:1824.00px;top:364px;font-size:15.50px;color:#f3f2f5;line-height:17px;height:17px;letter-spacing:-0.124px;-webkit-text-stroke:0.42px #f3f2f5;">Value</span>
<svg class="r" style="left:1631.20px;top:465.20px;" width="13.60" height="13.60" viewBox="0 0 13.6 13.6" preserveAspectRatio="none"><path d="M6.8 0.8 L6.8 12.8 M0.8 6.8 L12.8 6.8" stroke="#a9a8ae" stroke-width="1.5" stroke-linecap="round"/></svg>
<div class="r" style="left:1659.40px;top:471.40px;width:12.40px;height:1.40px;background:#55535a;"></div>
<div class="r" style="left:1623.00px;top:495.60px;width:366.50px;height:1.20px;background:#3c3a42;"></div>
<span class="t" style="left:1621.60px;top:506px;font-size:16.90px;color:#aeadb2;line-height:19px;height:19px;font-weight:700;letter-spacing:0.153px;">Document</span>
<span class="t" style="left:1685.30px;top:544px;font-size:15.50px;color:#f3f2f5;line-height:17px;height:17px;letter-spacing:-0.657px;-webkit-text-stroke:0.42px #f3f2f5;">Label</span>
<div class="r" style="left:1728.00px;top:541.00px;width:261.40px;height:21.80px;background:#2e2c35;border:1px solid #38363e;border-top-color:#34323a;border-bottom-color:#4d4b53;"></div>
<span class="t" style="left:1732.40px;top:542px;font-size:16.60px;color:#74727a;line-height:19px;height:19px;letter-spacing:-0.286px;">Xcode Specific Label</span>
<svg class="r" style="left:1731.20px;top:575.40px;" width="10.00" height="10.00" viewBox="0 0 10 10" preserveAspectRatio="none"><path d="M1.2 1.2 L8.8 8.8 M8.8 1.2 L1.2 8.8" stroke="#77757d" stroke-width="1.4" stroke-linecap="round"/></svg>
<div class="r" style="left:1752.00px;top:574.40px;width:12.00px;height:12.00px;background:#ef8d86;border:0.8px solid rgba(255,255,255,0.35);"></div>
<div class="r" style="left:1776.70px;top:574.40px;width:12.00px;height:12.00px;background:#f6c878;border:0.8px solid rgba(255,255,255,0.35);"></div>
<div class="r" style="left:1801.00px;top:574.40px;width:12.00px;height:12.00px;background:#f7dc7e;border:0.8px solid rgba(255,255,255,0.35);"></div>
<div class="r" style="left:1825.80px;top:574.40px;width:12.00px;height:12.00px;background:#c0df7f;border:0.8px solid rgba(255,255,255,0.35);"></div>
<div class="r" style="left:1850.20px;top:574.40px;width:12.00px;height:12.00px;background:#90bdf2;border:0.8px solid rgba(255,255,255,0.35);"></div>
<div class="r" style="left:1875.00px;top:574.40px;width:12.00px;height:12.00px;background:#d7bdea;border:0.8px solid rgba(255,255,255,0.35);"></div>
<div class="r" style="left:1899.70px;top:574.40px;width:12.00px;height:12.00px;background:#d4d4d6;border:0.8px solid rgba(255,255,255,0.35);"></div>
<span class="t" style="left:1659.70px;top:601px;font-size:15.50px;color:#f3f2f5;line-height:17px;height:17px;letter-spacing:-0.463px;-webkit-text-stroke:0.42px #f3f2f5;">Object ID</span>
<span class="t" style="left:1729.70px;top:601px;font-size:15.90px;color:#f3f2f5;line-height:17px;height:17px;letter-spacing:0.131px;-webkit-text-stroke:0.42px #f3f2f5;">bPS-um-xrL</span>
<span class="t" style="left:1690.00px;top:628px;font-size:15.50px;color:#f3f2f5;line-height:17px;height:17px;letter-spacing:-0.714px;-webkit-text-stroke:0.42px #f3f2f5;">Lock</span>
<div class="r" style="left:1728.00px;top:625.60px;width:262.00px;height:21.60px;background:linear-gradient(to bottom,#626067,#5a585f);border-radius:5.5px;box-shadow:inset 0 0.6px 0 rgba(255,255,255,0.14);"></div>
<span class="t" style="left:1736.30px;top:627px;font-size:16.10px;color:#f3f2f5;line-height:18px;height:18px;letter-spacing:0.176px;-webkit-text-stroke:0.42px #f3f2f5;">Inherited - (Nothing)</span>
<div class="r" style="left:1971.30px;top:627.60px;width:16.80px;height:17.40px;background:linear-gradient(to bottom,#2375ea,#1561d6);border-radius:4.5px;"></div>
<svg class="r" style="left:1971.30px;top:627.60px;" width="16.80" height="17.40" viewBox="0 0 17 17.4" preserveAspectRatio="none"><path d="M5.6 6.8 L8.5 4 L11.4 6.8 M5.6 10.4 L8.5 13.2 L11.4 10.4" fill="none" stroke="#fff" stroke-width="1.6" stroke-linecap="round" stroke-linejoin="round"/></svg>
<span class="t" style="left:1630.60px;top:659px;font-size:15.50px;color:#f3f2f5;line-height:17px;height:17px;letter-spacing:-0.300px;-webkit-text-stroke:0.42px #f3f2f5;">Localizer Hint</span>
<div class="r" style="left:1728.00px;top:657.00px;width:261.40px;height:21.60px;background:#2e2c35;border:1px solid #38363e;border-top-color:#34323a;border-bottom-color:#4d4b53;"></div>
<span class="t" style="left:1732.40px;top:658px;font-size:16.60px;color:#74727a;line-height:19px;height:19px;letter-spacing:-0.396px;">Comment For Localizer</span>
<div class="r" style="left:1623.00px;top:696.80px;width:366.50px;height:1.20px;background:#3c3a42;"></div>
<span class="t" style="left:1621.60px;top:706px;font-size:16.90px;color:#aeadb2;line-height:19px;height:19px;font-weight:700;letter-spacing:0.089px;">Accessibility</span>
<span class="t" style="left:1639.00px;top:740px;font-size:15.50px;color:#f3f2f5;line-height:17px;height:17px;letter-spacing:-0.209px;-webkit-text-stroke:0.42px #f3f2f5;">Accessibility</span>
<div class="r" style="left:1728.30px;top:740.20px;width:16.60px;height:16.60px;background:linear-gradient(to bottom,#2a7af0,#1560d8);border-radius:4px;"></div>
<svg class="r" style="left:1728.30px;top:740.20px;" width="16.60" height="16.60" viewBox="0 0 16.6 16.6" preserveAspectRatio="none"><path d="M4.2 8.8 L7.2 11.8 L12.4 4.8" fill="none" stroke="#fff" stroke-width="2" stroke-linecap="round" stroke-linejoin="round"/></svg>
<span class="t" style="left:1750.40px;top:740px;font-size:15.90px;color:#f3f2f5;line-height:17px;height:17px;letter-spacing:-0.292px;-webkit-text-stroke:0.42px #f3f2f5;">Enabled</span>
<span class="t" style="left:1685.30px;top:769px;font-size:15.50px;color:#f3f2f5;line-height:17px;height:17px;letter-spacing:-0.582px;-webkit-text-stroke:0.42px #f3f2f5;">Label</span>
<div class="r" style="left:1728.00px;top:767.00px;width:261.40px;height:20.60px;background:#2e2c35;border:1px solid #38363e;border-top-color:#34323a;border-bottom-color:#4d4b53;"></div>
<span class="t" style="left:1732.40px;top:768px;font-size:16.60px;color:#74727a;line-height:19px;height:19px;letter-spacing:-0.655px;">Label</span>
<span class="t" style="left:1693.20px;top:800px;font-size:15.50px;color:#f3f2f5;line-height:17px;height:17px;letter-spacing:0.045px;-webkit-text-stroke:0.42px #f3f2f5;">Hint</span>
<div class="r" style="left:1728.00px;top:798.00px;width:261.40px;height:20.60px;background:#2e2c35;border:1px solid #38363e;border-top-color:#34323a;border-bottom-color:#4d4b53;"></div>
<span class="t" style="left:1732.40px;top:799px;font-size:16.60px;color:#74727a;line-height:19px;height:19px;letter-spacing:-0.307px;">Hint</span>
<span class="t" style="left:1662.00px;top:831px;font-size:15.50px;color:#f3f2f5;line-height:17px;height:17px;letter-spacing:-0.061px;-webkit-text-stroke:0.42px #f3f2f5;">Identifier</span>
<div class="r" style="left:1728.00px;top:829.40px;width:261.40px;height:20.60px;background:#2e2c35;border:1px solid #38363e;border-top-color:#34323a;border-bottom-color:#4d4b53;"></div>
<span class="t" style="left:1732.40px;top:830px;font-size:16.60px;color:#74727a;line-height:19px;height:19px;letter-spacing:-0.008px;">Identifier</span>
<div class="r" style="left:1623.00px;top:857.70px;width:366.50px;height:1.20px;background:#3c3a42;"></div>
<span class="t" style="left:1684.80px;top:866px;font-size:15.50px;color:#f3f2f5;line-height:17px;height:17px;letter-spacing:-0.415px;-webkit-text-stroke:0.42px #f3f2f5;">Traits</span>
<div class="r" style="left:1728.30px;top:865.80px;width:16.60px;height:16.60px;background:linear-gradient(to bottom,#2a7af0,#1560d8);border-radius:4px;"></div>
<svg class="r" style="left:1728.30px;top:865.80px;" width="16.60" height="16.60" viewBox="0 0 16.6 16.6" preserveAspectRatio="none"><path d="M4.2 8.8 L7.2 11.8 L12.4 4.8" fill="none" stroke="#fff" stroke-width="2" stroke-linecap="round" stroke-linejoin="round"/></svg>
<span class="t" style="left:1750.40px;top:866px;font-size:15.90px;color:#f3f2f5;line-height:17px;height:17px;letter-spacing:0.126px;-webkit-text-stroke:0.42px #f3f2f5;">Button</span>
<div class="r" style="left:1728.30px;top:890.35px;width:16.60px;height:16.60px;background:linear-gradient(to bottom,#403e45,#4e4c53 45%,#5f5d64);border-radius:4.2px;"></div>
<span class="t" style="left:1750.40px;top:891px;font-size:15.90px;color:#f3f2f5;line-height:17px;height:17px;letter-spacing:-0.398px;-webkit-text-stroke:0.42px #f3f2f5;">Image</span>
<div class="r" style="left:1728.30px;top:914.90px;width:16.60px;height:16.60px;background:linear-gradient(to bottom,#403e45,#4e4c53 45%,#5f5d64);border-radius:4.2px;"></div>
<span class="t" style="left:1750.40px;top:915px;font-size:15.90px;color:#f3f2f5;line-height:17px;height:17px;letter-spacing:0.204px;-webkit-text-stroke:0.42px #f3f2f5;">Static Text</span>
<div class="r" style="left:1728.30px;top:939.45px;width:16.60px;height:16.60px;background:linear-gradient(to bottom,#403e45,#4e4c53 45%,#5f5d64);border-radius:4.2px;"></div>
<span class="t" style="left:1750.40px;top:940px;font-size:15.90px;color:#f3f2f5;line-height:17px;height:17px;letter-spacing:-0.151px;-webkit-text-stroke:0.42px #f3f2f5;">Search Field</span>
<div class="r" style="left:1728.30px;top:964.00px;width:16.60px;height:16.60px;background:linear-gradient(to bottom,#403e45,#4e4c53 45%,#5f5d64);border-radius:4.2px;"></div>
<span class="t" style="left:1750.40px;top:964px;font-size:15.90px;color:#f3f2f5;line-height:17px;height:17px;letter-spacing:-0.218px;-webkit-text-stroke:0.42px #f3f2f5;">Plays Sound</span>
<div class="r" style="left:1728.30px;top:988.55px;width:16.60px;height:16.60px;background:linear-gradient(to bottom,#403e45,#4e4c53 45%,#5f5d64);border-radius:4.2px;"></div>
<span class="t" style="left:1750.40px;top:989px;font-size:15.90px;color:#f3f2f5;line-height:17px;height:17px;letter-spacing:-0.208px;-webkit-text-stroke:0.42px #f3f2f5;">Keyboard Key</span>
<div class="r" style="left:1728.30px;top:1013.10px;width:16.60px;height:16.60px;background:linear-gradient(to bottom,#403e45,#4e4c53 45%,#5f5d64);border-radius:4.2px;"></div>
<span class="t" style="left:1750.40px;top:1013px;font-size:15.90px;color:#f3f2f5;line-height:17px;height:17px;letter-spacing:-0.155px;-webkit-text-stroke:0.42px #f3f2f5;">Summary Element</span>
<div class="r" style="left:1728.30px;top:1037.65px;width:16.60px;height:16.60px;background:linear-gradient(to bottom,#2a7af0,#1560d8);border-radius:4px;"></div>
<svg class="r" style="left:1728.30px;top:1037.65px;" width="16.60" height="16.60" viewBox="0 0 16.6 16.6" preserveAspectRatio="none"><path d="M4.2 8.8 L7.2 11.8 L12.4 4.8" fill="none" stroke="#fff" stroke-width="2" stroke-linecap="round" stroke-linejoin="round"/></svg>
<span class="t" style="left:1750.40px;top:1038px;font-size:15.90px;color:#f3f2f5;line-height:17px;height:17px;letter-spacing:0.048px;-webkit-text-stroke:0.42px #f3f2f5;">User Interaction Enabled</span>
<div class="r" style="left:1728.30px;top:1062.20px;width:16.60px;height:16.60px;background:linear-gradient(to bottom,#403e45,#4e4c53 45%,#5f5d64);border-radius:4.2px;"></div>
<span class="t" style="left:1750.40px;top:1062px;font-size:15.90px;color:#f3f2f5;line-height:17px;height:17px;letter-spacing:0.079px;-webkit-text-stroke:0.42px #f3f2f5;">Updates Frequently</span>
<div class="r" style="left:1728.30px;top:1086.75px;width:16.60px;height:16.60px;background:linear-gradient(to bottom,#403e45,#4e4c53 45%,#5f5d64);border-radius:4.2px;"></div>
<span class="t" style="left:1750.40px;top:1087px;font-size:15.90px;color:#f3f2f5;line-height:17px;height:17px;letter-spacing:-0.007px;-webkit-text-stroke:0.42px #f3f2f5;">Starts Media Session</span>
<div class="r" style="left:1728.30px;top:1111.30px;width:16.60px;height:16.60px;background:linear-gradient(to bottom,#403e45,#4e4c53 45%,#5f5d64);border-radius:4.2px;"></div>
<span class="t" style="left:1750.40px;top:1112px;font-size:15.90px;color:#f3f2f5;line-height:17px;height:17px;letter-spacing:0.094px;-webkit-text-stroke:0.42px #f3f2f5;">Adjustable</span>
<div class="r" style="left:1728.30px;top:1135.85px;width:16.60px;height:16.60px;background:linear-gradient(to bottom,#403e45,#4e4c53 45%,#5f5d64);border-radius:4.2px;"></div>
<span class="t" style="left:1750.40px;top:1136px;font-size:15.90px;color:#f3f2f5;line-height:17px;height:17px;letter-spacing:0.148px;-webkit-text-stroke:0.42px #f3f2f5;">Allows Direct Interaction</span>
<div class="r" style="left:1728.30px;top:1160.40px;width:16.60px;height:16.60px;background:linear-gradient(to bottom,#403e45,#4e4c53 45%,#5f5d64);border-radius:4.2px;"></div>
<span class="t" style="left:1750.40px;top:1161px;font-size:15.90px;color:#f3f2f5;line-height:17px;height:17px;letter-spacing:-0.207px;-webkit-text-stroke:0.42px #f3f2f5;">Causes Page Turn</span>
<div class="r" style="left:1728.30px;top:1184.95px;width:16.60px;height:16.60px;background:linear-gradient(to bottom,#403e45,#4e4c53 45%,#5f5d64);border-radius:4.2px;"></div>
<span class="t" style="left:1750.40px;top:1185px;font-size:15.90px;color:#f3f2f5;line-height:17px;height:17px;letter-spacing:-0.210px;-webkit-text-stroke:0.42px #f3f2f5;">Header</span>
<div class="r" style="left:1864.30px;top:865.80px;width:16.60px;height:16.60px;background:linear-gradient(to bottom,#403e45,#4e4c53 45%,#5f5d64);border-radius:4.2px;"></div>
<span class="t" style="left:1887.00px;top:866px;font-size:15.90px;color:#f3f2f5;line-height:17px;height:17px;letter-spacing:-0.056px;-webkit-text-stroke:0.42px #f3f2f5;">Link</span>
<div class="r" style="left:1864.30px;top:890.35px;width:16.60px;height:16.60px;background:linear-gradient(to bottom,#403e45,#4e4c53 45%,#5f5d64);border-radius:4.2px;"></div>
<span class="t" style="left:1887.00px;top:891px;font-size:15.90px;color:#f3f2f5;line-height:17px;height:17px;letter-spacing:0.017px;-webkit-text-stroke:0.42px #f3f2f5;">Selected</span>
<div class="r" style="left:0;top:0;width:2000px;height:1221px;border-radius:10.5px;border:1.3px solid rgba(150,147,160,0.6);border-bottom-color:rgba(125,123,130,0.75);border-right-color:rgba(110,108,116,0.7);pointer-events:none"></div>
<div class="r" style="left:12.00px;top:0.00px;width:1976.00px;height:1.40px;background:rgba(165,162,175,0.75);"></div>
</div>
</body></html>
